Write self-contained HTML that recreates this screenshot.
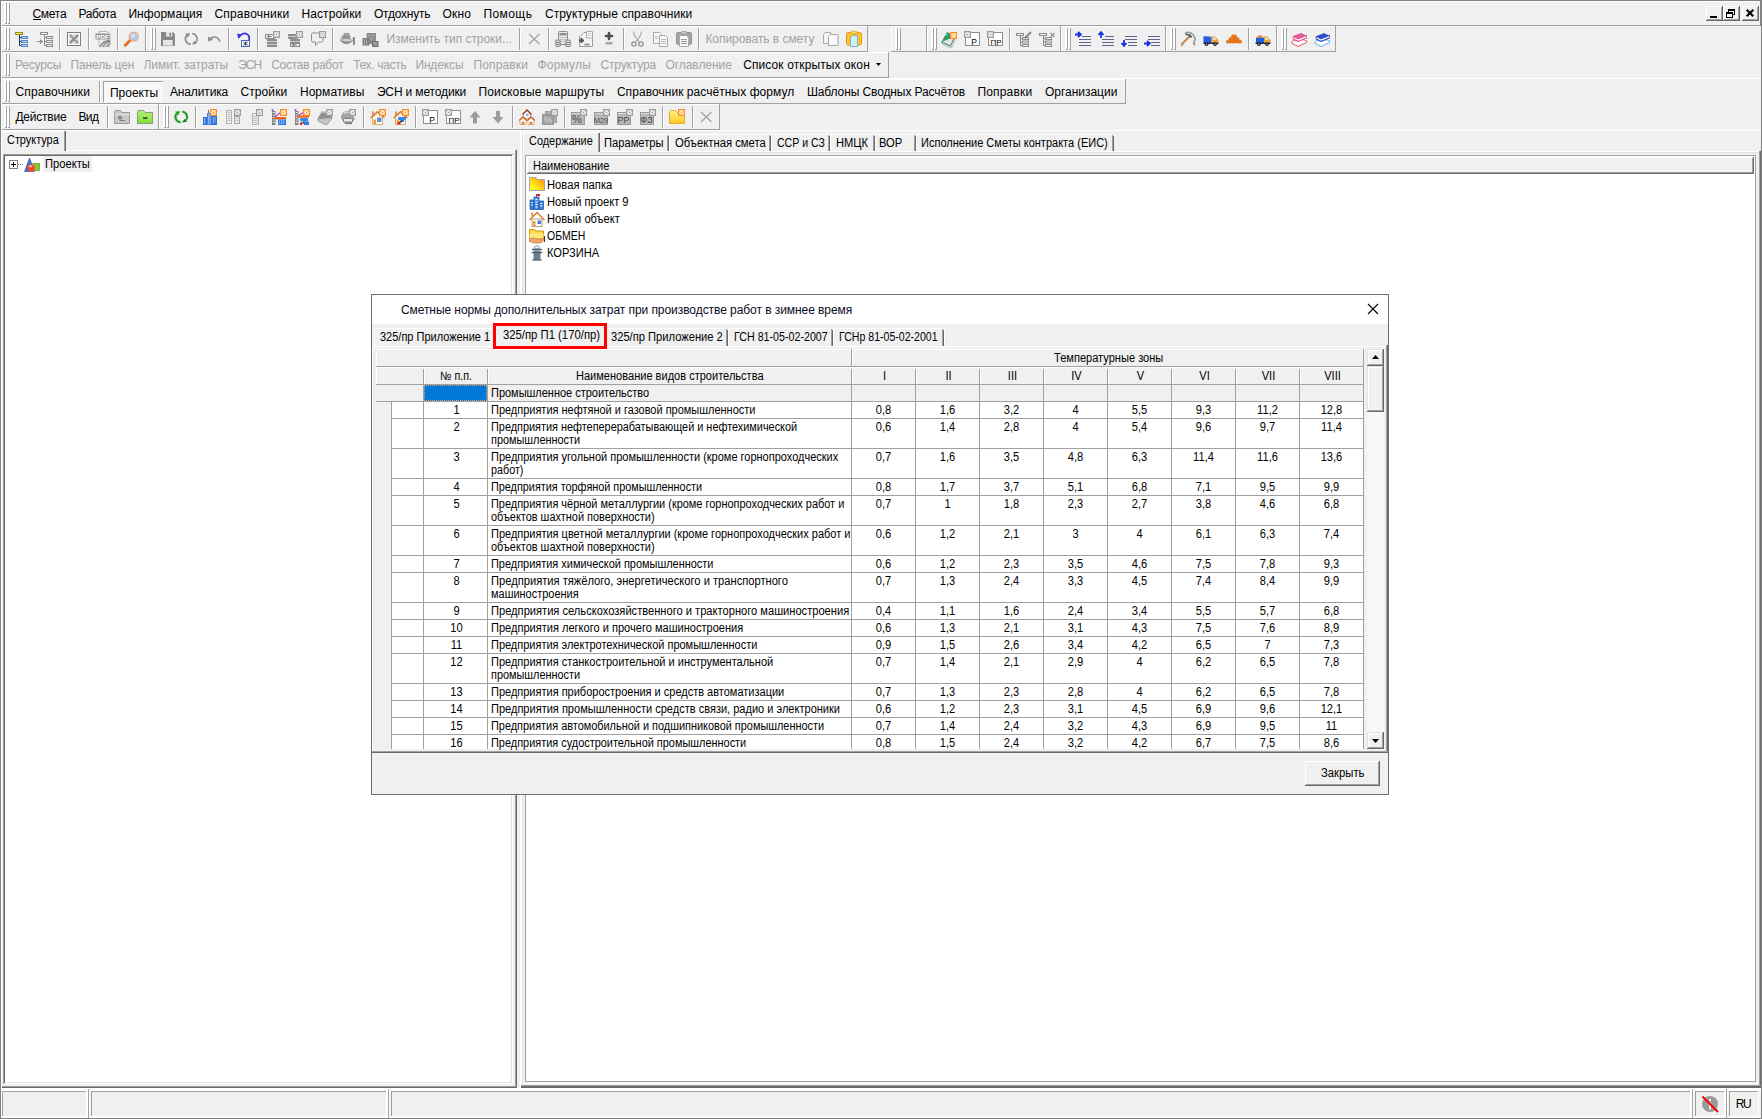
<!DOCTYPE html>
<html lang="ru"><head><meta charset="utf-8"><title>Смета</title>
<style>
html,body{margin:0;padding:0;}
body{width:1762px;height:1119px;overflow:hidden;background:#f0f0f0;position:relative;
 font-family:"Liberation Sans",sans-serif;}
body>div,body>span,body>svg{position:absolute;box-sizing:border-box;}
body>span{white-space:pre;}
svg{overflow:visible;display:block}
</style></head>
<body>
<div style="left:4px;top:3px;width:2px;height:21px;background:#fff"></div>
<div style="left:6px;top:3px;width:1px;height:21px;background:#a0a0a0"></div>
<div style="left:5px;top:23px;width:2px;height:1px;background:#a0a0a0"></div>
<div style="left:7px;top:3px;width:2px;height:21px;background:#fff"></div>
<div style="left:9px;top:3px;width:1px;height:21px;background:#a0a0a0"></div>
<div style="left:8px;top:23px;width:2px;height:1px;background:#a0a0a0"></div>
<span style="left:32.40px;top:5.84px;letter-spacing:-0.247px;font-size:12px;line-height:16px;color:#000;">Смета</span>
<span style="left:78.40px;top:5.84px;letter-spacing:-0.318px;font-size:12px;line-height:16px;color:#000;">Работа</span>
<span style="left:128.40px;top:5.84px;letter-spacing:0.052px;font-size:12px;line-height:16px;color:#000;">Информация</span>
<span style="left:214.40px;top:5.84px;letter-spacing:0.209px;font-size:12px;line-height:16px;color:#000;">Справочники</span>
<span style="left:301.40px;top:5.84px;letter-spacing:0.128px;font-size:12px;line-height:16px;color:#000;">Настройки</span>
<span style="left:373.90px;top:5.84px;letter-spacing:-0.207px;font-size:12px;line-height:16px;color:#000;">Отдохнуть</span>
<span style="left:442.40px;top:5.84px;letter-spacing:0.215px;font-size:12px;line-height:16px;color:#000;">Окно</span>
<span style="left:483.40px;top:5.84px;letter-spacing:0.440px;font-size:12px;line-height:16px;color:#000;">Помощь</span>
<span style="left:544.90px;top:5.84px;letter-spacing:0.085px;font-size:12px;line-height:16px;color:#000;">Структурные справочники</span>
<div style="left:33px;top:19px;width:8px;height:1px;background:#000"></div>
<div style="left:1px;top:25px;width:1759px;height:1px;background:#a0a0a0"></div>
<div style="left:1706px;top:6px;width:17px;height:15px;background:#f0f0f0"></div>
<div style="left:1706px;top:6px;width:16px;height:1px;background:#fff"></div>
<div style="left:1706px;top:6px;width:1px;height:14px;background:#fff"></div>
<div style="left:1706px;top:20px;width:17px;height:1px;background:#696969"></div>
<div style="left:1722px;top:6px;width:1px;height:15px;background:#696969"></div>
<div style="left:1707px;top:19px;width:15px;height:1px;background:#a0a0a0"></div>
<div style="left:1721px;top:7px;width:1px;height:13px;background:#a0a0a0"></div>
<div style="left:1723px;top:6px;width:17px;height:15px;background:#f0f0f0"></div>
<div style="left:1723px;top:6px;width:16px;height:1px;background:#fff"></div>
<div style="left:1723px;top:6px;width:1px;height:14px;background:#fff"></div>
<div style="left:1723px;top:20px;width:17px;height:1px;background:#696969"></div>
<div style="left:1739px;top:6px;width:1px;height:15px;background:#696969"></div>
<div style="left:1724px;top:19px;width:15px;height:1px;background:#a0a0a0"></div>
<div style="left:1738px;top:7px;width:1px;height:13px;background:#a0a0a0"></div>
<div style="left:1742px;top:6px;width:17px;height:15px;background:#f0f0f0"></div>
<div style="left:1742px;top:6px;width:16px;height:1px;background:#fff"></div>
<div style="left:1742px;top:6px;width:1px;height:14px;background:#fff"></div>
<div style="left:1742px;top:20px;width:17px;height:1px;background:#696969"></div>
<div style="left:1758px;top:6px;width:1px;height:15px;background:#696969"></div>
<div style="left:1743px;top:19px;width:15px;height:1px;background:#a0a0a0"></div>
<div style="left:1757px;top:7px;width:1px;height:13px;background:#a0a0a0"></div>
<div style="left:1710px;top:16px;width:7px;height:2px;background:#000"></div>
<div style="left:1728px;top:9px;width:7px;height:6px;border:1px solid #000;border-top-width:2px"></div>
<div style="left:1726px;top:12px;width:7px;height:6px;border:1px solid #000;border-top-width:2px;background:#f0f0f0"></div>
<svg style="left:1742px;top:6px" width="17" height="15" viewBox="0 0 17 15"><path d="M4.7 3.7l6.6 6.600 M11.300 3.700l-6.600 6.600" stroke="#000" stroke-width="2.1" stroke-linecap="butt" fill="none"/></svg>
<div style="left:0px;top:26px;width:146px;height:1px;background:#fff"></div>
<div style="left:0px;top:26px;width:1px;height:26px;background:#fff"></div>
<div style="left:0px;top:51px;width:146px;height:1px;background:#a0a0a0"></div>
<div style="left:145px;top:26px;width:1px;height:26px;background:#a0a0a0"></div>
<div style="left:4px;top:28px;width:2px;height:22px;background:#fff"></div>
<div style="left:6px;top:28px;width:1px;height:22px;background:#a0a0a0"></div>
<div style="left:5px;top:49px;width:2px;height:1px;background:#a0a0a0"></div>
<div style="left:7px;top:28px;width:2px;height:22px;background:#fff"></div>
<div style="left:9px;top:28px;width:1px;height:22px;background:#a0a0a0"></div>
<div style="left:8px;top:49px;width:2px;height:1px;background:#a0a0a0"></div>
<div style="left:146px;top:26px;width:722px;height:1px;background:#fff"></div>
<div style="left:146px;top:26px;width:1px;height:26px;background:#fff"></div>
<div style="left:146px;top:51px;width:722px;height:1px;background:#a0a0a0"></div>
<div style="left:867px;top:26px;width:1px;height:26px;background:#a0a0a0"></div>
<div style="left:150px;top:28px;width:2px;height:22px;background:#fff"></div>
<div style="left:152px;top:28px;width:1px;height:22px;background:#a0a0a0"></div>
<div style="left:151px;top:49px;width:2px;height:1px;background:#a0a0a0"></div>
<div style="left:153px;top:28px;width:2px;height:22px;background:#fff"></div>
<div style="left:155px;top:28px;width:1px;height:22px;background:#a0a0a0"></div>
<div style="left:154px;top:49px;width:2px;height:1px;background:#a0a0a0"></div>
<div style="left:891px;top:26px;width:36px;height:1px;background:#fff"></div>
<div style="left:891px;top:26px;width:1px;height:26px;background:#fff"></div>
<div style="left:891px;top:51px;width:36px;height:1px;background:#a0a0a0"></div>
<div style="left:926px;top:26px;width:1px;height:26px;background:#a0a0a0"></div>
<div style="left:895px;top:28px;width:2px;height:22px;background:#fff"></div>
<div style="left:897px;top:28px;width:1px;height:22px;background:#a0a0a0"></div>
<div style="left:896px;top:49px;width:2px;height:1px;background:#a0a0a0"></div>
<div style="left:898px;top:28px;width:2px;height:22px;background:#fff"></div>
<div style="left:900px;top:28px;width:1px;height:22px;background:#a0a0a0"></div>
<div style="left:899px;top:49px;width:2px;height:1px;background:#a0a0a0"></div>
<div style="left:927px;top:26px;width:134px;height:1px;background:#fff"></div>
<div style="left:927px;top:26px;width:1px;height:26px;background:#fff"></div>
<div style="left:927px;top:51px;width:134px;height:1px;background:#a0a0a0"></div>
<div style="left:1060px;top:26px;width:1px;height:26px;background:#a0a0a0"></div>
<div style="left:931px;top:28px;width:2px;height:22px;background:#fff"></div>
<div style="left:933px;top:28px;width:1px;height:22px;background:#a0a0a0"></div>
<div style="left:932px;top:49px;width:2px;height:1px;background:#a0a0a0"></div>
<div style="left:934px;top:28px;width:2px;height:22px;background:#fff"></div>
<div style="left:936px;top:28px;width:1px;height:22px;background:#a0a0a0"></div>
<div style="left:935px;top:49px;width:2px;height:1px;background:#a0a0a0"></div>
<div style="left:1061px;top:26px;width:105px;height:1px;background:#fff"></div>
<div style="left:1061px;top:26px;width:1px;height:26px;background:#fff"></div>
<div style="left:1061px;top:51px;width:105px;height:1px;background:#a0a0a0"></div>
<div style="left:1165px;top:26px;width:1px;height:26px;background:#a0a0a0"></div>
<div style="left:1065px;top:28px;width:2px;height:22px;background:#fff"></div>
<div style="left:1067px;top:28px;width:1px;height:22px;background:#a0a0a0"></div>
<div style="left:1066px;top:49px;width:2px;height:1px;background:#a0a0a0"></div>
<div style="left:1068px;top:28px;width:2px;height:22px;background:#fff"></div>
<div style="left:1070px;top:28px;width:1px;height:22px;background:#a0a0a0"></div>
<div style="left:1069px;top:49px;width:2px;height:1px;background:#a0a0a0"></div>
<div style="left:1166px;top:26px;width:111px;height:1px;background:#fff"></div>
<div style="left:1166px;top:26px;width:1px;height:26px;background:#fff"></div>
<div style="left:1166px;top:51px;width:111px;height:1px;background:#a0a0a0"></div>
<div style="left:1276px;top:26px;width:1px;height:26px;background:#a0a0a0"></div>
<div style="left:1170px;top:28px;width:2px;height:22px;background:#fff"></div>
<div style="left:1172px;top:28px;width:1px;height:22px;background:#a0a0a0"></div>
<div style="left:1171px;top:49px;width:2px;height:1px;background:#a0a0a0"></div>
<div style="left:1173px;top:28px;width:2px;height:22px;background:#fff"></div>
<div style="left:1175px;top:28px;width:1px;height:22px;background:#a0a0a0"></div>
<div style="left:1174px;top:49px;width:2px;height:1px;background:#a0a0a0"></div>
<div style="left:1277px;top:26px;width:59px;height:1px;background:#fff"></div>
<div style="left:1277px;top:26px;width:1px;height:26px;background:#fff"></div>
<div style="left:1277px;top:51px;width:59px;height:1px;background:#a0a0a0"></div>
<div style="left:1335px;top:26px;width:1px;height:26px;background:#a0a0a0"></div>
<div style="left:1281px;top:28px;width:2px;height:22px;background:#fff"></div>
<div style="left:1283px;top:28px;width:1px;height:22px;background:#a0a0a0"></div>
<div style="left:1282px;top:49px;width:2px;height:1px;background:#a0a0a0"></div>
<div style="left:1284px;top:28px;width:2px;height:22px;background:#fff"></div>
<div style="left:1286px;top:28px;width:1px;height:22px;background:#a0a0a0"></div>
<div style="left:1285px;top:49px;width:2px;height:1px;background:#a0a0a0"></div>
<div style="left:59px;top:28px;width:1px;height:22px;background:#a0a0a0"></div>
<div style="left:60px;top:28px;width:1px;height:22px;background:#fff"></div>
<div style="left:88px;top:28px;width:1px;height:22px;background:#a0a0a0"></div>
<div style="left:89px;top:28px;width:1px;height:22px;background:#fff"></div>
<div style="left:117px;top:28px;width:1px;height:22px;background:#a0a0a0"></div>
<div style="left:118px;top:28px;width:1px;height:22px;background:#fff"></div>
<div style="left:228px;top:28px;width:1px;height:22px;background:#a0a0a0"></div>
<div style="left:229px;top:28px;width:1px;height:22px;background:#fff"></div>
<div style="left:257px;top:28px;width:1px;height:22px;background:#a0a0a0"></div>
<div style="left:258px;top:28px;width:1px;height:22px;background:#fff"></div>
<div style="left:332px;top:28px;width:1px;height:22px;background:#a0a0a0"></div>
<div style="left:333px;top:28px;width:1px;height:22px;background:#fff"></div>
<div style="left:519px;top:28px;width:1px;height:22px;background:#a0a0a0"></div>
<div style="left:520px;top:28px;width:1px;height:22px;background:#fff"></div>
<div style="left:548px;top:28px;width:1px;height:22px;background:#a0a0a0"></div>
<div style="left:549px;top:28px;width:1px;height:22px;background:#fff"></div>
<div style="left:623px;top:28px;width:1px;height:22px;background:#a0a0a0"></div>
<div style="left:624px;top:28px;width:1px;height:22px;background:#fff"></div>
<div style="left:698px;top:28px;width:1px;height:22px;background:#a0a0a0"></div>
<div style="left:699px;top:28px;width:1px;height:22px;background:#fff"></div>
<div style="left:1009px;top:28px;width:1px;height:22px;background:#a0a0a0"></div>
<div style="left:1010px;top:28px;width:1px;height:22px;background:#fff"></div>
<div style="left:1248px;top:28px;width:1px;height:22px;background:#a0a0a0"></div>
<div style="left:1249px;top:28px;width:1px;height:22px;background:#fff"></div>
<span style="left:386.40px;top:30.84px;letter-spacing:-0.036px;font-size:12px;line-height:16px;color:#a2a2a2;">Изменить тип строки...</span>
<span style="left:705.40px;top:30.84px;letter-spacing:-0.045px;font-size:12px;line-height:16px;color:#a2a2a2;">Копировать в смету</span>
<div style="left:0px;top:52px;width:889px;height:1px;background:#fff"></div>
<div style="left:0px;top:52px;width:1px;height:26px;background:#fff"></div>
<div style="left:0px;top:77px;width:889px;height:1px;background:#a0a0a0"></div>
<div style="left:888px;top:52px;width:1px;height:26px;background:#a0a0a0"></div>
<div style="left:4px;top:54px;width:2px;height:22px;background:#fff"></div>
<div style="left:6px;top:54px;width:1px;height:22px;background:#a0a0a0"></div>
<div style="left:5px;top:75px;width:2px;height:1px;background:#a0a0a0"></div>
<div style="left:7px;top:54px;width:2px;height:22px;background:#fff"></div>
<div style="left:9px;top:54px;width:1px;height:22px;background:#a0a0a0"></div>
<div style="left:8px;top:75px;width:2px;height:1px;background:#a0a0a0"></div>
<span style="left:14.90px;top:56.84px;letter-spacing:-0.154px;font-size:12px;line-height:16px;color:#a2a2a2;">Ресурсы</span>
<span style="left:70.40px;top:56.84px;letter-spacing:-0.083px;font-size:12px;line-height:16px;color:#a2a2a2;">Панель цен</span>
<span style="left:143.40px;top:56.84px;letter-spacing:-0.017px;font-size:12px;line-height:16px;color:#a2a2a2;">Лимит. затраты</span>
<span style="left:238.15px;top:56.84px;letter-spacing:-0.906px;font-size:12px;line-height:16px;color:#a2a2a2;">ЭСН</span>
<span style="left:271.15px;top:56.84px;letter-spacing:-0.247px;font-size:12px;line-height:16px;color:#a2a2a2;">Состав работ</span>
<span style="left:353.15px;top:56.84px;letter-spacing:-0.317px;font-size:12px;line-height:16px;color:#a2a2a2;">Тех. часть</span>
<span style="left:415.40px;top:56.84px;letter-spacing:-0.134px;font-size:12px;line-height:16px;color:#a2a2a2;">Индексы</span>
<span style="left:473.40px;top:56.84px;letter-spacing:0.158px;font-size:12px;line-height:16px;color:#a2a2a2;">Поправки</span>
<span style="left:537.40px;top:56.84px;letter-spacing:0.219px;font-size:12px;line-height:16px;color:#a2a2a2;">Формулы</span>
<span style="left:600.40px;top:56.84px;letter-spacing:-0.132px;font-size:12px;line-height:16px;color:#a2a2a2;">Структура</span>
<span style="left:665.40px;top:56.84px;letter-spacing:-0.041px;font-size:12px;line-height:16px;color:#a2a2a2;">Оглавление</span>
<span style="left:743.15px;top:56.84px;letter-spacing:0.111px;font-size:12px;line-height:16px;color:#000;">Список открытых окон</span>
<svg style="left:876px;top:63px" width="5" height="3" viewBox="0 0 5 3"><path d="M0 0h5l-2.500 3z" fill="#000"/></svg>
<div style="left:1px;top:78px;width:1760px;height:1px;background:#fff"></div>
<div style="left:0px;top:79px;width:1126px;height:1px;background:#fff"></div>
<div style="left:0px;top:79px;width:1px;height:25px;background:#fff"></div>
<div style="left:0px;top:103px;width:1126px;height:1px;background:#a0a0a0"></div>
<div style="left:1125px;top:79px;width:1px;height:25px;background:#a0a0a0"></div>
<div style="left:4px;top:81px;width:2px;height:21px;background:#fff"></div>
<div style="left:6px;top:81px;width:1px;height:21px;background:#a0a0a0"></div>
<div style="left:5px;top:101px;width:2px;height:1px;background:#a0a0a0"></div>
<div style="left:7px;top:81px;width:2px;height:21px;background:#fff"></div>
<div style="left:9px;top:81px;width:1px;height:21px;background:#a0a0a0"></div>
<div style="left:8px;top:101px;width:2px;height:1px;background:#a0a0a0"></div>
<span style="left:15.40px;top:83.84px;letter-spacing:0.186px;font-size:12px;line-height:16px;color:#000;">Справочники</span>
<span style="left:169.90px;top:83.84px;letter-spacing:-0.128px;font-size:12px;line-height:16px;color:#000;">Аналитика</span>
<span style="left:240.40px;top:83.84px;letter-spacing:0.118px;font-size:12px;line-height:16px;color:#000;">Стройки</span>
<span style="left:299.90px;top:83.84px;letter-spacing:0.069px;font-size:12px;line-height:16px;color:#000;">Нормативы</span>
<span style="left:376.90px;top:83.84px;letter-spacing:-0.146px;font-size:12px;line-height:16px;color:#000;">ЭСН и методики</span>
<span style="left:478.40px;top:83.84px;letter-spacing:0.169px;font-size:12px;line-height:16px;color:#000;">Поисковые маршруты</span>
<span style="left:616.90px;top:83.84px;letter-spacing:0.059px;font-size:12px;line-height:16px;color:#000;">Справочник расчётных формул</span>
<span style="left:806.90px;top:83.84px;letter-spacing:-0.106px;font-size:12px;line-height:16px;color:#000;">Шаблоны Сводных Расчётов</span>
<span style="left:977.40px;top:83.84px;letter-spacing:0.189px;font-size:12px;line-height:16px;color:#000;">Поправки</span>
<span style="left:1044.90px;top:83.84px;letter-spacing:-0.009px;font-size:12px;line-height:16px;color:#000;">Организации</span>
<div style="left:99px;top:81px;width:1px;height:21px;background:#a0a0a0"></div>
<div style="left:100px;top:81px;width:1px;height:21px;background:#fff"></div>
<div style="left:103px;top:81px;width:60px;height:21px;background:repeating-conic-gradient(#fff 0 25%,#f0f0f0 0 50%) 0 0/2px 2px"></div>
<div style="left:103px;top:81px;width:60px;height:1px;background:#a0a0a0"></div>
<div style="left:103px;top:81px;width:1px;height:21px;background:#a0a0a0"></div>
<span style="left:109.90px;top:84.84px;letter-spacing:0.013px;font-size:12px;line-height:16px;color:#000;">Проекты</span>
<div style="left:0px;top:104px;width:159px;height:1px;background:#fff"></div>
<div style="left:0px;top:104px;width:1px;height:26px;background:#fff"></div>
<div style="left:0px;top:129px;width:159px;height:1px;background:#a0a0a0"></div>
<div style="left:158px;top:104px;width:1px;height:26px;background:#a0a0a0"></div>
<div style="left:4px;top:106px;width:2px;height:22px;background:#fff"></div>
<div style="left:6px;top:106px;width:1px;height:22px;background:#a0a0a0"></div>
<div style="left:5px;top:127px;width:2px;height:1px;background:#a0a0a0"></div>
<div style="left:7px;top:106px;width:2px;height:22px;background:#fff"></div>
<div style="left:9px;top:106px;width:1px;height:22px;background:#a0a0a0"></div>
<div style="left:8px;top:127px;width:2px;height:1px;background:#a0a0a0"></div>
<div style="left:159px;top:104px;width:561px;height:1px;background:#fff"></div>
<div style="left:159px;top:104px;width:1px;height:26px;background:#fff"></div>
<div style="left:159px;top:129px;width:561px;height:1px;background:#a0a0a0"></div>
<div style="left:719px;top:104px;width:1px;height:26px;background:#a0a0a0"></div>
<div style="left:163px;top:106px;width:2px;height:22px;background:#fff"></div>
<div style="left:165px;top:106px;width:1px;height:22px;background:#a0a0a0"></div>
<div style="left:164px;top:127px;width:2px;height:1px;background:#a0a0a0"></div>
<div style="left:166px;top:106px;width:2px;height:22px;background:#fff"></div>
<div style="left:168px;top:106px;width:1px;height:22px;background:#a0a0a0"></div>
<div style="left:167px;top:127px;width:2px;height:1px;background:#a0a0a0"></div>
<span style="left:15.40px;top:108.84px;letter-spacing:-0.221px;font-size:12px;line-height:16px;color:#000;">Действие</span>
<span style="left:78.40px;top:108.84px;letter-spacing:-0.573px;font-size:12px;line-height:16px;color:#000;">Вид</span>
<div style="left:107px;top:106px;width:1px;height:22px;background:#a0a0a0"></div>
<div style="left:108px;top:106px;width:1px;height:22px;background:#fff"></div>
<div style="left:195px;top:106px;width:1px;height:22px;background:#a0a0a0"></div>
<div style="left:196px;top:106px;width:1px;height:22px;background:#fff"></div>
<div style="left:363px;top:106px;width:1px;height:22px;background:#a0a0a0"></div>
<div style="left:364px;top:106px;width:1px;height:22px;background:#fff"></div>
<div style="left:415px;top:106px;width:1px;height:22px;background:#a0a0a0"></div>
<div style="left:416px;top:106px;width:1px;height:22px;background:#fff"></div>
<div style="left:512px;top:106px;width:1px;height:22px;background:#a0a0a0"></div>
<div style="left:513px;top:106px;width:1px;height:22px;background:#fff"></div>
<div style="left:564px;top:106px;width:1px;height:22px;background:#a0a0a0"></div>
<div style="left:565px;top:106px;width:1px;height:22px;background:#fff"></div>
<div style="left:662px;top:106px;width:1px;height:22px;background:#a0a0a0"></div>
<div style="left:663px;top:106px;width:1px;height:22px;background:#fff"></div>
<div style="left:692px;top:106px;width:1px;height:22px;background:#a0a0a0"></div>
<div style="left:693px;top:106px;width:1px;height:22px;background:#fff"></div>
<div style="left:1px;top:130px;width:1760px;height:1px;background:#fff"></div>
<div style="left:1px;top:1088px;width:1760px;height:3px;background:#fff"></div>
<div style="left:2px;top:1091px;width:84px;height:1px;background:#a0a0a0"></div>
<div style="left:2px;top:1091px;width:1px;height:25px;background:#a0a0a0"></div>
<div style="left:2px;top:1116px;width:85px;height:1px;background:#fff"></div>
<div style="left:86px;top:1091px;width:1px;height:26px;background:#fff"></div>
<div style="left:87px;top:1089px;width:1px;height:28px;background:#fff"></div>
<div style="left:88px;top:1089px;width:1px;height:30px;background:#a0a0a0"></div>
<div style="left:89px;top:1089px;width:1px;height:28px;background:#fff"></div>
<div style="left:91px;top:1091px;width:295px;height:1px;background:#a0a0a0"></div>
<div style="left:91px;top:1091px;width:1px;height:25px;background:#a0a0a0"></div>
<div style="left:91px;top:1116px;width:296px;height:1px;background:#fff"></div>
<div style="left:386px;top:1091px;width:1px;height:26px;background:#fff"></div>
<div style="left:387px;top:1089px;width:1px;height:28px;background:#fff"></div>
<div style="left:388px;top:1089px;width:1px;height:30px;background:#a0a0a0"></div>
<div style="left:389px;top:1089px;width:1px;height:28px;background:#fff"></div>
<div style="left:391px;top:1091px;width:1299px;height:1px;background:#a0a0a0"></div>
<div style="left:391px;top:1091px;width:1px;height:25px;background:#a0a0a0"></div>
<div style="left:391px;top:1116px;width:1300px;height:1px;background:#fff"></div>
<div style="left:1690px;top:1091px;width:1px;height:26px;background:#fff"></div>
<div style="left:1691px;top:1089px;width:1px;height:28px;background:#fff"></div>
<div style="left:1692px;top:1089px;width:1px;height:30px;background:#a0a0a0"></div>
<div style="left:1693px;top:1089px;width:1px;height:28px;background:#fff"></div>
<div style="left:1695px;top:1091px;width:29px;height:1px;background:#a0a0a0"></div>
<div style="left:1695px;top:1091px;width:1px;height:25px;background:#a0a0a0"></div>
<div style="left:1695px;top:1116px;width:30px;height:1px;background:#fff"></div>
<div style="left:1724px;top:1091px;width:1px;height:26px;background:#fff"></div>
<div style="left:1725px;top:1089px;width:1px;height:28px;background:#fff"></div>
<div style="left:1726px;top:1089px;width:1px;height:30px;background:#a0a0a0"></div>
<div style="left:1727px;top:1089px;width:1px;height:28px;background:#fff"></div>
<div style="left:1729px;top:1091px;width:29px;height:1px;background:#a0a0a0"></div>
<div style="left:1729px;top:1091px;width:1px;height:25px;background:#a0a0a0"></div>
<div style="left:1729px;top:1116px;width:30px;height:1px;background:#fff"></div>
<div style="left:1758px;top:1091px;width:1px;height:26px;background:#fff"></div>
<span style="left:1735.70px;top:1095.84px;letter-spacing:-1.472px;font-size:12px;line-height:16px;color:#000;">RU</span>
<svg style="left:1702px;top:1096px" width="16" height="16" viewBox="0 0 16 16"><circle cx="8" cy="8" r="8" fill="#9a9a9a"/><rect x="7" y="6" width="2" height="7.500" fill="#f0f0f0"/><rect x="7" y="3" width="2" height="2" fill="#f0f0f0"/><path d="M0.500 0.500l15.500 15.500" stroke="#ff0000" stroke-width="2"/></svg>
<div style="left:0px;top:0px;width:1762px;height:1px;background:#828282"></div>
<div style="left:0px;top:0px;width:1px;height:1119px;background:#828282"></div>
<div style="left:1px;top:1px;width:1759px;height:1px;background:#fff"></div>
<div style="left:1px;top:1px;width:1px;height:1117px;background:#fff"></div>
<div style="left:1761px;top:0px;width:1px;height:1119px;background:#828282"></div>
<div style="left:1760px;top:0px;width:1px;height:26px;background:#828282"></div>
<div style="left:0px;top:1118px;width:1762px;height:1px;background:#828282"></div>
<div style="left:1px;top:1117px;width:1760px;height:1px;background:#fff"></div>
<div style="left:88px;top:1117px;width:1px;height:1px;background:#a0a0a0"></div>
<div style="left:388px;top:1117px;width:1px;height:1px;background:#a0a0a0"></div>
<div style="left:1692px;top:1117px;width:1px;height:1px;background:#a0a0a0"></div>
<div style="left:1726px;top:1117px;width:1px;height:1px;background:#a0a0a0"></div>
<svg style="left:14px;top:31px" width="16" height="16" viewBox="0 0 16 16"><rect x="1.5" y="1.5" width="7" height="2" fill="#ffff00" stroke="#8a8a3a"/><path d="M5.500 4v10.500h2 M5.500 6.500h2 M5.500 10.500h2" fill="none" stroke="#1f2f5a"/><rect x="7.500" y="5.5" width="6" height="2" fill="#a8d0f8" stroke="#5a86c8"/><rect x="7.500" y="9.5" width="6" height="2" fill="#a8d0f8" stroke="#5a86c8"/><rect x="7.500" y="13.5" width="6" height="2" fill="#a8d0f8" stroke="#5a86c8"/></svg>
<svg style="left:37px;top:31px" width="16" height="16" viewBox="0 0 16 16"><path d="M0 10h3v-2l3 2.500-3 2.500v-2h-3z" fill="#8c8c8c"/><rect x="3.500" y="1.500" width="7" height="2" fill="#f4f4f4" stroke="#8c8c8c"/><path d="M7.500 4v10.500h2 M7.500 6.500h2 M7.500 10.500h2" fill="none" stroke="#8c8c8c"/><rect x="9.500" y="5.5" width="6" height="2" fill="#f4f4f4" stroke="#8c8c8c"/><rect x="9.500" y="9.5" width="6" height="2" fill="#f4f4f4" stroke="#8c8c8c"/><rect x="9.500" y="13.5" width="6" height="2" fill="#f4f4f4" stroke="#8c8c8c"/></svg>
<svg style="left:66px;top:31px" width="16" height="16" viewBox="0 0 16 16"><rect x="1.500" y="1.500" width="13" height="13" fill="#fbfbfb" stroke="#7e7e7e"/><rect x="3" y="3" width="10" height="10" fill="#e2e2e2"/><path d="M4 4l8 8 M12 4l-8 8" stroke="#8a8a8a" stroke-width="2.4"/><path d="M4.500 4l8 8" stroke="#bdbdbd" stroke-width="0.8"/></svg>
<svg style="left:95px;top:31px" width="16" height="16" viewBox="0 0 16 16"><path d="M4 0.500h8l3 3v12h-11z" fill="#f2f2f2" stroke="#b8b8b8"/><rect x="0.500" y="2.500" width="14" height="6" rx="0.800" fill="#949494"/><text x="7.500" y="7.800" font-size="6.2" font-weight="bold" text-anchor="middle" fill="#fff" font-family="Liberation Sans">PDF</text><path d="M5 15.500c2-4 5-6 10-6 M8 15.500c1.500-3 4-4.500 7-4.500 M11.500 15.500c1-1.500 2-2.500 3.500-2.500" fill="none" stroke="#8a8a8a" stroke-width="1.500"/></svg>
<svg style="left:124px;top:31px" width="16" height="16" viewBox="0 0 16 16"><path d="M1.200 14.200l5.200-5.200" stroke="#d9600f" stroke-width="2.800" stroke-linecap="round"/><path d="M1.200 13.600l5-5" stroke="#f59a4a" stroke-width="1" stroke-linecap="round"/><circle cx="9.700" cy="5.700" r="4.500" fill="#b4c8f2" stroke="#f0a878" stroke-width="1.300"/><circle cx="9" cy="4.800" r="2" fill="#d6e2fa"/></svg>
<svg style="left:160px;top:31px" width="16" height="16" viewBox="0 0 16 16"><path d="M1 1h12l1.900 1.900v12.100h-13.900z" fill="#868686"/><rect x="3" y="9" width="9.600" height="5.600" fill="#e6e6e6"/><rect x="6" y="1" width="6.300" height="4.600" fill="#e0e0e0"/><rect x="9.500" y="2" width="1.300" height="2.800" fill="#6a6a6a"/><path d="M3 14.800h9.600" stroke="#c4c4c4"/></svg>
<svg style="left:183px;top:31px" width="16" height="16" viewBox="0 0 16 16"><g transform="translate(0.900,0.700) scale(0.900)"><path d="M2.900 4.300A6.600 6.100 0 0 0 7.600 14" fill="none" stroke="#8a8a8a" stroke-width="1.7"/><path d="M7.100 1.800l-5.600 0.300 2.700 4.600z" fill="#8a8a8a"/><path d="M9.300 2A6.600 6.100 0 0 1 13.200 11.800" fill="none" stroke="#8a8a8a" stroke-width="1.7"/><path d="M9 14.200l5.400-0.900-2.600-3.100z" fill="#7c7c7c"/></g></svg>
<svg style="left:206px;top:31px" width="16" height="16" viewBox="0 0 16 16"><path d="M3.500 9c2.500-4.500 8.500-4 10.500 1.500" fill="none" stroke="#8c8c8c" stroke-width="1.500"/><path d="M1.700 5.200l0.600 5.300 4.700-1.700z" fill="#8c8c8c"/></svg>
<svg style="left:235px;top:31px" width="16" height="16" viewBox="0 0 16 16"><path d="M5 4.800c4.500-5 10.500-1.500 9 4.200" fill="none" stroke="#2c2ce6" stroke-width="1.700"/><path d="M2 2.500l5 1.300-3.500 4.200z" fill="#2c2ce6"/><rect x="6.500" y="9.500" width="8" height="6" fill="#fff" stroke="#4a62c0"/><path d="M8.300 11l4.400 3.200 M12.700 11l-4.400 3.200 M10.500 10.700v3.800" stroke="#1a1a1a" stroke-width="0.800"/></svg>
<svg style="left:264px;top:31px" width="16" height="16" viewBox="0 0 16 16"><rect x="3" y="8" width="10" height="8" fill="#8e8e8e"/><path d="M3 10.500h10 M3 13.500h10" stroke="#c8c8c8"/><rect x="1.500" y="3.500" width="9" height="4" fill="#ececec" stroke="#8c8c8c"/><path d="M3.500 5.500h4 M3.500 5.500l1.500-1.200 M3.500 5.500l1.500 1.200" stroke="#6a6a6a" stroke-width="0.9" fill="none"/><path d="M9 0h7v7h-7z" fill="#9c9c9c"/><path d="M13.8 4.8l0.8 0.8 M13.8 2.2l0.8 -0.8 M11.2 4.8l-0.8 0.8 M11.2 2.2l-0.8 -0.8 M14.3 3.5l0.8 0.0 M10.7 3.5l-0.8 0.0 M12.5 5.3l0.0 0.8 M12.5 1.7l0.0 -0.8 " stroke="#fff" stroke-width="1.100"/><circle cx="12.5" cy="3.5" r="1.900" fill="#fff"/><circle cx="12.5" cy="3.5" r="0.900" fill="#9c9c9c"/></svg>
<svg style="left:287px;top:31px" width="16" height="16" viewBox="0 0 16 16"><rect x="3" y="8" width="10" height="4" fill="#8e8e8e"/><path d="M3 10.500h10" stroke="#c8c8c8"/><rect x="3.500" y="12.500" width="9" height="3" fill="#ececec" stroke="#8c8c8c"/><path d="M5.500 14h4 M5.500 14l1.500-1 M5.500 14l1.500 1" stroke="#6a6a6a" stroke-width="0.9" fill="none"/><rect x="1" y="3" width="9.500" height="5" fill="#8e8e8e"/><path d="M1 5.500h9.500" stroke="#c8c8c8"/><path d="M9 0h7v7h-7z" fill="#9c9c9c"/><path d="M13.8 4.8l0.8 0.8 M13.8 2.2l0.8 -0.8 M11.2 4.8l-0.8 0.8 M11.2 2.2l-0.8 -0.8 M14.3 3.5l0.8 0.0 M10.7 3.5l-0.8 0.0 M12.5 5.3l0.0 0.8 M12.5 1.7l0.0 -0.8 " stroke="#fff" stroke-width="1.100"/><circle cx="12.5" cy="3.5" r="1.900" fill="#fff"/><circle cx="12.5" cy="3.5" r="0.900" fill="#9c9c9c"/></svg>
<svg style="left:310px;top:31px" width="16" height="16" viewBox="0 0 16 16"><path d="M1.500 3.500c0-1 0.500-1.500 1.500-1.500h8.500c1 0 1.500 0.500 1.500 1.500v6c0 1-0.500 1.500-1.500 1.500h-3l-3 3.500v-3.500h-2.500c-1 0-1.500-0.500-1.500-1.500z" fill="#f0f0f0" stroke="#8e8e8e"/><path d="M9 0h7v7h-7z" fill="#9c9c9c"/><path d="M13.8 4.8l0.8 0.8 M13.8 2.2l0.8 -0.8 M11.2 4.8l-0.8 0.8 M11.2 2.2l-0.8 -0.8 M14.3 3.5l0.8 0.0 M10.7 3.5l-0.8 0.0 M12.5 5.3l0.0 0.8 M12.5 1.7l0.0 -0.8 " stroke="#fff" stroke-width="1.100"/><circle cx="12.5" cy="3.5" r="1.900" fill="#fff"/><circle cx="12.5" cy="3.5" r="0.900" fill="#9c9c9c"/></svg>
<svg style="left:339px;top:31px" width="16" height="16" viewBox="0 0 16 16"><path d="M0.500 8c2 6 11 7 14 0.500c-4 2.500-10 2.500-14-0.500z" fill="#8e8e8e"/><path d="M1 7.500c3 2 9 2 13 0" fill="none" stroke="#a8a8a8"/><rect x="3" y="5" width="8" height="2.500" fill="#9a9a9a" stroke="#7c7c7c" stroke-width="0.600"/><rect x="5" y="2.500" width="5" height="2.500" fill="#ababab" stroke="#7c7c7c" stroke-width="0.600"/><path d="M15 6v8" stroke="#4a4a4a" stroke-width="1.200"/><path d="M5 9.500h5" stroke="#d0d0d0" stroke-width="1.200"/></svg>
<svg style="left:362px;top:31px" width="16" height="16" viewBox="0 0 16 16"><rect x="4.500" y="2" width="9.500" height="11" fill="#8e8e8e"/><path d="M6.500 4.500h2 M10.500 4.500h2 M8 6.500l2 2 M10 6.500l-2 2" stroke="#bcbcbc"/><rect x="0.500" y="7" width="7" height="7.500" fill="#7e7e7e"/><path d="M2.500 8.500v5 M4.500 8.500v5" stroke="#b0b0b0"/><rect x="10.500" y="10.500" width="5.500" height="5" fill="#8a8a8a" stroke="#6e6e6e"/><path d="M11.500 12h3.500" stroke="#c0c0c0"/></svg>
<svg style="left:526px;top:31px" width="16" height="16" viewBox="0 0 16 16"><path d="M3 3l10.500 10 M13.500 3l-10.500 10" stroke="#a4a4a4" stroke-width="1.400"/></svg>
<svg style="left:555px;top:31px" width="16" height="16" viewBox="0 0 16 16"><rect x="3.500" y="0.500" width="9" height="13" rx="0.800" fill="#e8e8e8" stroke="#8e8e8e"/><rect x="4.500" y="2" width="7" height="2.400" fill="#8e8e8e"/><path d="M5 6.500h6 M5 8.500h6 M5 10.500h6" stroke="#b0b0b0" stroke-dasharray="1.400 0.900"/><ellipse cx="3" cy="14.3" rx="2.800" ry="1.300" fill="#d8d8d8" stroke="#7e7e7e" stroke-width="0.900"/><ellipse cx="3" cy="12.3" rx="2.800" ry="1.300" fill="#d8d8d8" stroke="#7e7e7e" stroke-width="0.900"/><ellipse cx="3" cy="10.3" rx="2.800" ry="1.300" fill="#d8d8d8" stroke="#7e7e7e" stroke-width="0.900"/><ellipse cx="13" cy="14.3" rx="2.800" ry="1.300" fill="#d8d8d8" stroke="#7e7e7e" stroke-width="0.900"/><ellipse cx="13" cy="12.3" rx="2.800" ry="1.300" fill="#d8d8d8" stroke="#7e7e7e" stroke-width="0.900"/><ellipse cx="13" cy="10.3" rx="2.800" ry="1.300" fill="#d8d8d8" stroke="#7e7e7e" stroke-width="0.900"/></svg>
<svg style="left:578px;top:31px" width="16" height="16" viewBox="0 0 16 16"><path d="M1.500 6l4.500-4.500h8.500v14h-13z" fill="#f4f4f4" stroke="#9a9a9a"/><path d="M8.500 0.500h6v6.500h-6z" fill="#fbfbfb" stroke="#a8a8a8"/><path d="M10 2.500h3 M10 4.500h3" stroke="#c4c4c4"/><path d="M1 9.500h5 M3.500 7v5" stroke="#4e4e4e" stroke-width="1.900"/><path d="M6.500 13.500h5" stroke="#8e8e8e" stroke-width="1.800"/></svg>
<svg style="left:601px;top:31px" width="16" height="16" viewBox="0 0 16 16"><path d="M5 5h6 M8 2v6" stroke="#4e4e4e" stroke-width="2.600" stroke-linecap="round"/><rect x="4.500" y="11" width="7" height="2.500" rx="0.800" fill="#a4a4a4"/></svg>
<svg style="left:630px;top:31px" width="16" height="16" viewBox="0 0 16 16"><path d="M3.500 0.500c0.500 4 2.500 7 5.500 10 M11.500 0.500c-0.500 4-2.500 7-5.500 10" stroke="#a8a8a8" stroke-width="1.200" fill="none"/><circle cx="4" cy="13" r="2.200" fill="none" stroke="#8a8a8a" stroke-width="1.200"/><circle cx="11" cy="13" r="2.200" fill="none" stroke="#8a8a8a" stroke-width="1.200"/></svg>
<svg style="left:653px;top:31px" width="16" height="16" viewBox="0 0 16 16"><path d="M0.5 1.5h6l2 2v9h-8z" fill="#f8f8f8" stroke="#a8a8a8"/><path d="M6.5 4.5h6l2 2v9h-8z" fill="#f8f8f8" stroke="#a8a8a8"/><path d="M2 5.500h3 M2 7.500h3 M8 8.500h5 M8 10.500h5 M8 12.500h5" stroke="#b8b8b8"/></svg>
<svg style="left:676px;top:31px" width="16" height="16" viewBox="0 0 16 16"><rect x="0.500" y="1.500" width="15" height="12" rx="1.500" fill="#a6a6a6" stroke="#949494"/><rect x="5" y="0.500" width="6" height="2.500" rx="1" fill="#c6c6c6" stroke="#949494" stroke-width="0.700"/><path d="M3.5 4.5h7l2 2v9h-9z" fill="#f8f8f8" stroke="#a8a8a8"/><path d="M5 8.500h6 M5 10.500h6 M5 12.500h6" stroke="#9a9a9a"/></svg>
<svg style="left:823px;top:31px" width="16" height="16" viewBox="0 0 16 16"><path d="M0.500 3.500l2-2h5v11h-7z" fill="#f6f6f6" stroke="#a8a8a8"/><path d="M5.500 5.500l2-2h7.500v11h-9.500z" fill="#f9f9f9" stroke="#a8a8a8"/></svg>
<svg style="left:846px;top:31px" width="16" height="16" viewBox="0 0 16 16"><rect x="0.500" y="1.500" width="15" height="12.500" rx="1.800" fill="#ffc428" stroke="#d99a1e"/><rect x="5" y="0.300" width="6" height="2.400" rx="1" fill="#ffd86a" stroke="#d99a1e" stroke-width="0.700"/><path d="M4.500 6.500l2-2h5v11h-7z" fill="#cdeef4" stroke="#8ab0c0"/></svg>
<svg style="left:941px;top:31px" width="16" height="16" viewBox="0 0 16 16"><path d="M0.500 11l5.500-10 8 4.500-4.500 9.500z" fill="#2e9a5e"/><path d="M0.500 11l1.500 2.500 8.500 3.500 4-9.500-0.500-2" fill="#dfe6ea" stroke="#9aa8b0" stroke-width="0.700"/><path d="M0.500 11l9 4 4.500-9.500" fill="none" stroke="#1f7a45" stroke-width="0.900"/><path d="M5 3.500l1.500 0.800" stroke="#d8f0e0"/><path d="M9 1h7v7h-7z" fill="#ff8c1a"/><path d="M13.8 5.8l0.8 0.8 M13.8 3.2l0.8 -0.8 M11.2 5.8l-0.8 0.8 M11.2 3.2l-0.8 -0.8 M14.3 4.5l0.8 0.0 M10.7 4.5l-0.8 0.0 M12.5 6.3l0.0 0.8 M12.5 2.7l0.0 -0.8 " stroke="#fff" stroke-width="1.100"/><circle cx="12.5" cy="4.5" r="1.900" fill="#fff"/><circle cx="12.5" cy="4.5" r="0.900" fill="#ff8c1a"/></svg>
<svg style="left:964px;top:31px" width="16" height="16" viewBox="0 0 16 16"><rect x="1.500" y="1.500" width="14" height="13" fill="#fff" stroke="#8e8e8e"/><text x="10" y="13.600" font-size="8.5" text-anchor="middle" fill="#000" font-family="Liberation Sans">P</text><path d="M0 0h7v7h-7z" fill="#9c9c9c"/><path d="M4.8 4.8l0.8 0.8 M4.8 2.2l0.8 -0.8 M2.2 4.8l-0.8 0.8 M2.2 2.2l-0.8 -0.8 M5.3 3.5l0.8 0.0 M1.7 3.5l-0.8 0.0 M3.5 5.3l0.0 0.8 M3.5 1.7l0.0 -0.8 " stroke="#fff" stroke-width="1.100"/><circle cx="3.5" cy="3.5" r="1.900" fill="#fff"/><circle cx="3.5" cy="3.5" r="0.900" fill="#9c9c9c"/></svg>
<svg style="left:987px;top:31px" width="16" height="16" viewBox="0 0 16 16"><rect x="1.500" y="1.500" width="14" height="13" fill="#fff" stroke="#8e8e8e"/><text x="9" y="13.600" font-size="8" text-anchor="middle" fill="#000" font-family="Liberation Sans">ПР</text><path d="M0 0h7v7h-7z" fill="#9c9c9c"/><path d="M4.8 4.8l0.8 0.8 M4.8 2.2l0.8 -0.8 M2.2 4.8l-0.8 0.8 M2.2 2.2l-0.8 -0.8 M5.3 3.5l0.8 0.0 M1.7 3.5l-0.8 0.0 M3.5 5.3l0.0 0.8 M3.5 1.7l0.0 -0.8 " stroke="#fff" stroke-width="1.100"/><circle cx="3.5" cy="3.5" r="1.900" fill="#fff"/><circle cx="3.5" cy="3.5" r="0.900" fill="#9c9c9c"/></svg>
<svg style="left:1016px;top:31px" width="16" height="16" viewBox="0 0 16 16"><rect x="0.500" y="2.500" width="7" height="2" fill="#f0f0f0" stroke="#8c8c8c"/><path d="M4.500 5v9.500h2 M4.500 7.500h2 M4.500 11h2" fill="none" stroke="#8c8c8c"/><rect x="6.500" y="6.5" width="6" height="2" fill="#f0f0f0" stroke="#8c8c8c"/><rect x="6.500" y="10" width="6" height="2" fill="#f0f0f0" stroke="#8c8c8c"/><rect x="6.500" y="13.5" width="6" height="2" fill="#f0f0f0" stroke="#8c8c8c"/><path d="M15 1l-5.500 5.500" stroke="#8e8e8e" stroke-width="2.200"/><path d="M9.800 5.800l-1.300 2.200 2.200-1.300z" fill="#6e6e6e"/></svg>
<svg style="left:1039px;top:31px" width="16" height="16" viewBox="0 0 16 16"><rect x="0.500" y="2.500" width="7" height="2" fill="#f0f0f0" stroke="#8c8c8c"/><path d="M4.500 5v9.500h2 M4.500 7.500h2 M4.500 11h2" fill="none" stroke="#8c8c8c"/><rect x="6.500" y="6.5" width="6" height="2" fill="#f0f0f0" stroke="#8c8c8c"/><rect x="6.500" y="10" width="6" height="2" fill="#f0f0f0" stroke="#8c8c8c"/><rect x="6.500" y="13.5" width="6" height="2" fill="#f0f0f0" stroke="#8c8c8c"/><path d="M11.500 2l4 4 M15.500 2l-4 4" stroke="#8e8e8e" stroke-width="1.100"/></svg>
<svg style="left:1075px;top:31px" width="16" height="16" viewBox="0 0 16 16"><path d="M0 3.500h5 M3 1l2.800 2.500-2.800 2.500" fill="none" stroke="#1430e6" stroke-width="1.800"/><path d="M7 5.500h9 M4 8.500h12 M4 11.500h12 M4 14.500h12" stroke="#5e6286"/></svg>
<svg style="left:1098px;top:31px" width="16" height="16" viewBox="0 0 16 16"><path d="M3 7v-5 M0.500 4l2.500-2.800 2.500 2.800" fill="none" stroke="#1430e6" stroke-width="1.800"/><path d="M7 5.500h9 M4 8.500h12 M4 11.500h12 M4 14.500h12" stroke="#5e6286"/></svg>
<svg style="left:1121px;top:31px" width="16" height="16" viewBox="0 0 16 16"><path d="M3 9v5 M0.500 12l2.500 2.800 2.500-2.800" fill="none" stroke="#1430e6" stroke-width="1.800"/><path d="M4 5.500h12 M4 8.500h12 M7 11.500h9 M7 14.500h9" stroke="#5e6286"/></svg>
<svg style="left:1144px;top:31px" width="16" height="16" viewBox="0 0 16 16"><path d="M0 12.500h5 M3 10l2.800 2.500-2.800 2.500" fill="none" stroke="#1430e6" stroke-width="1.800"/><path d="M4 5.500h12 M4 8.500h12 M7 11.500h9 M7 14.500h9" stroke="#5e6286"/></svg>
<svg style="left:1180px;top:31px" width="16" height="16" viewBox="0 0 16 16"><path d="M5 2.500a6.500 6.500 0 0 1 8.500 9.500" fill="none" stroke="#8aa0a0" stroke-width="1.600"/><path d="M13.500 12l1.500 2" stroke="#b87a3a" stroke-width="1.600"/><path d="M1.500 13.500l8-8" stroke="#c88a4a" stroke-width="2"/><path d="M5.500 2.500l5 1 2 3-2 0.300-2.500-2.300-2.500-0.500z" fill="#5a5a5a"/><path d="M1 14.500l2-1" stroke="#8aa0a0" stroke-width="1.600"/></svg>
<svg style="left:1203px;top:31px" width="16" height="16" viewBox="0 0 16 16"><path d="M0.500 5.500l8 0.500v6h-8z" fill="#1e5ee0"/><path d="M0.500 5.500l8 0.500" stroke="#5a8af0"/><path d="M8.500 5.500h3.500l3.500 3.500v3.500h-7z" fill="#f0a038"/><path d="M10 6.500h2l1.800 2.200h-3.800z" fill="#d6ecff"/><rect x="0.500" y="11.500" width="15" height="1.500" fill="#2a2a5a"/><circle cx="3.500" cy="13.300" r="1.800" fill="#1a1a1a"/><circle cx="12" cy="13.300" r="1.800" fill="#1a1a1a"/><circle cx="3.500" cy="13.300" r="0.700" fill="#d0d0d0"/><circle cx="12" cy="13.300" r="0.700" fill="#d0d0d0"/></svg>
<svg style="left:1226px;top:31px" width="16" height="16" viewBox="0 0 16 16"><rect x="5.6" y="4" width="4.800" height="2.600" rx="0.800" fill="#f57a10" stroke="#c85a00" stroke-width="0.600"/><rect x="3" y="6.7" width="4.800" height="2.600" rx="0.800" fill="#f57a10" stroke="#c85a00" stroke-width="0.600"/><rect x="8.2" y="6.7" width="4.800" height="2.600" rx="0.800" fill="#f57a10" stroke="#c85a00" stroke-width="0.600"/><rect x="0.5" y="9.4" width="4.800" height="2.600" rx="0.800" fill="#f57a10" stroke="#c85a00" stroke-width="0.600"/><rect x="5.6" y="9.4" width="4.800" height="2.600" rx="0.800" fill="#f57a10" stroke="#c85a00" stroke-width="0.600"/><rect x="10.7" y="9.4" width="4.800" height="2.600" rx="0.800" fill="#f57a10" stroke="#c85a00" stroke-width="0.600"/></svg>
<svg style="left:1255px;top:31px" width="16" height="16" viewBox="0 0 16 16"><path d="M1 6.500h8v5.500h-8z" fill="#1e5ee0"/><path d="M2 6.500c1-3 5-3 6 0z" fill="#f57a10"/><path d="M9 5.500h3.500l3 3.500v3h-6.500z" fill="#f0a038"/><path d="M10.300 6.500h2l1.800 2.200h-3.800z" fill="#d6ecff"/><rect x="0.500" y="11.500" width="15" height="1.500" fill="#2a2a5a"/><circle cx="3.800" cy="13.300" r="1.800" fill="#1a1a1a"/><circle cx="12" cy="13.300" r="1.800" fill="#1a1a1a"/><circle cx="3.800" cy="13.300" r="0.700" fill="#d0d0d0"/><circle cx="12" cy="13.300" r="0.700" fill="#d0d0d0"/></svg>
<svg style="left:1291px;top:31px" width="16" height="16" viewBox="0 0 16 16"><path d="M1 10.500l8-3 6.500 2.500-8.500 4z" fill="#fff" stroke="#e8404a" stroke-width="0.900"/><path d="M1 10.500v2l6 3 8.500-4v-1.800" fill="#fff" stroke="#e8404a" stroke-width="0.900"/><path d="M2 5.500l8-3 5.500 2.500-8.500 3.500z" fill="#f0589e" stroke="#c83a7a" stroke-width="0.600"/><path d="M2 5.500v2.300l5 2.700 8.500-3.500v-2.500l-8.500 3.500z" fill="#fff" stroke="#c83a7a" stroke-width="0.700"/><path d="M2 7.800l5 2.700 8.500-3.500" fill="none" stroke="#f0589e" stroke-width="1.100"/></svg>
<svg style="left:1314px;top:31px" width="16" height="16" viewBox="0 0 16 16"><path d="M1 10.500l8-3 6.500 2.500-8.500 4z" fill="#fff" stroke="#4aa8f0" stroke-width="0.900"/><path d="M1 10.500v2l6 3 8.500-4v-1.800" fill="#fff" stroke="#4aa8f0" stroke-width="0.900"/><path d="M2 5.500l8-3 5.500 2.500-8.500 3.500z" fill="#2f50d8" stroke="#1d3aa8" stroke-width="0.600"/><path d="M2 5.500v2.300l5 2.700 8.500-3.500v-2.500l-8.500 3.500z" fill="#fff" stroke="#1d3aa8" stroke-width="0.700"/><path d="M2 7.800l5 2.700 8.500-3.500" fill="none" stroke="#2f50d8" stroke-width="1.100"/></svg>
<svg style="left:114px;top:109px" width="16" height="16" viewBox="0 0 16 16"><path d="M0.500 3l1-1.500h5l1.500 2h7.500v11h-15z" fill="#c8c8c8" stroke="#9a9a9a"/><path d="M0.500 5.500h15" stroke="#e0e0e0"/><path d="M6 11.500h5 M6 11.500v-4 M4 9.500l2-2.300 2 2.300" fill="none" stroke="#7e7e7e" stroke-width="1.200"/></svg>
<svg style="left:137px;top:109px" width="16" height="16" viewBox="0 0 16 16"><defs><linearGradient id="gg" x1="0" y1="0" x2="0" y2="1"><stop offset="0" stop-color="#b6f07a"/><stop offset="1" stop-color="#7ee03a"/></linearGradient></defs><path d="M0.500 3l1-1.500h5l1.500 2h7.500v11h-15z" fill="url(#gg)" stroke="#8a9a7a"/><rect x="6" y="8.300" width="4.500" height="1.500" fill="#2a3a1a"/></svg>
<svg style="left:173px;top:109px" width="16" height="16" viewBox="0 0 16 16"><g transform="translate(0.900,0.700) scale(0.900)"><path d="M2.900 4.300A6.600 6.100 0 0 0 7.600 14" fill="none" stroke="#23a01f" stroke-width="2.3"/><path d="M7.100 1.800l-5.600 0.300 2.700 4.600z" fill="#23a01f"/><path d="M9.300 2A6.600 6.100 0 0 1 13.200 11.800" fill="none" stroke="#23a01f" stroke-width="2.3"/><path d="M9 14.200l5.400-0.900-2.600-3.100z" fill="#0e7c0e"/></g></svg>
<svg style="left:202px;top:109px" width="16" height="16" viewBox="0 0 16 16"><rect x="1" y="8" width="4" height="8" fill="#2f6fd6"/><rect x="5" y="4" width="5" height="12" fill="#3f82e6"/><rect x="10" y="7" width="5" height="9" fill="#2f6fd6"/><path d="M2 10h2 M2 12h2 M2 14h2 M6 6h3 M6 8h3 M6 10h3 M6 12h3 M6 14h3 M11 9h3 M11 11h3 M11 13h3" stroke="#dcebff" stroke-dasharray="1 0.600"/><path d="M6.500 4v-3" stroke="#2f2f2f" stroke-width="0.700"/><path d="M8 0h7v7h-7z" fill="#ff8c1a"/><path d="M12.8 4.8l0.8 0.8 M12.8 2.2l0.8 -0.8 M10.2 4.8l-0.8 0.8 M10.2 2.2l-0.8 -0.8 M13.3 3.5l0.8 0.0 M9.7 3.5l-0.8 0.0 M11.5 5.3l0.0 0.8 M11.5 1.7l0.0 -0.8 " stroke="#fff" stroke-width="1.100"/><circle cx="11.5" cy="3.5" r="1.900" fill="#fff"/><circle cx="11.5" cy="3.5" r="0.900" fill="#ff8c1a"/></svg>
<svg style="left:225px;top:109px" width="16" height="16" viewBox="0 0 16 16"><rect x="1.500" y="1.500" width="5" height="13" fill="#ececec" stroke="#b4b4b4"/><rect x="9.500" y="7.500" width="5" height="7" fill="#ececec" stroke="#a8a8a8"/><path d="M2.500 3.500h3 M2.500 5.500h3 M2.500 7.500h3 M2.500 9.500h3 M2.500 11.500h3 M10.500 9.500h3 M10.500 11.500h3" stroke="#c0c0c0"/><path d="M9 0h7v7h-7z" fill="#9c9c9c"/><path d="M13.8 4.8l0.8 0.8 M13.8 2.2l0.8 -0.8 M11.2 4.8l-0.8 0.8 M11.2 2.2l-0.8 -0.8 M14.3 3.5l0.8 0.0 M10.7 3.5l-0.8 0.0 M12.5 5.3l0.0 0.8 M12.5 1.7l0.0 -0.8 " stroke="#fff" stroke-width="1.100"/><circle cx="12.5" cy="3.5" r="1.900" fill="#fff"/><circle cx="12.5" cy="3.5" r="0.900" fill="#9c9c9c"/></svg>
<svg style="left:248px;top:109px" width="16" height="16" viewBox="0 0 16 16"><rect x="4.500" y="4.500" width="6" height="11" fill="#ececec" stroke="#b4b4b4"/><path d="M5.500 7.500h4 M5.500 9.500h4 M5.500 11.500h4 M5.500 13.500h4" stroke="#c0c0c0"/><path d="M8 0h7v7h-7z" fill="#9c9c9c"/><path d="M12.8 4.8l0.8 0.8 M12.8 2.2l0.8 -0.8 M10.2 4.8l-0.8 0.8 M10.2 2.2l-0.8 -0.8 M13.3 3.5l0.8 0.0 M9.7 3.5l-0.8 0.0 M11.5 5.3l0.0 0.8 M11.5 1.7l0.0 -0.8 " stroke="#fff" stroke-width="1.100"/><circle cx="11.5" cy="3.5" r="1.900" fill="#fff"/><circle cx="11.5" cy="3.5" r="0.900" fill="#9c9c9c"/></svg>
<svg style="left:271px;top:109px" width="16" height="16" viewBox="0 0 16 16"><rect x="1" y="2" width="3.500" height="14" fill="#7e7e7e"/><path d="M1.800 3.500h2 M1.800 6h2 M1.800 8.500h2 M1.800 11h2 M1.800 13.500h2" stroke="#f0f0f0" stroke-width="1.200"/><circle cx="1.500" cy="1" r="1" fill="#9a4ad0"/><path d="M4 8l6-5" stroke="#c04ad0" stroke-width="1.400"/><rect x="3.500" y="8" width="11.500" height="2.400" fill="#f0601e"/><rect x="7" y="10.500" width="8" height="5.500" fill="#2f7ae0"/><path d="M8 12h6 M8 14h6" stroke="#cfe6ff" stroke-dasharray="1.200 0.800"/><path d="M9 0h7v7h-7z" fill="#ff8c1a"/><path d="M13.8 4.8l0.8 0.8 M13.8 2.2l0.8 -0.8 M11.2 4.8l-0.8 0.8 M11.2 2.2l-0.8 -0.8 M14.3 3.5l0.8 0.0 M10.7 3.5l-0.8 0.0 M12.5 5.3l0.0 0.8 M12.5 1.7l0.0 -0.8 " stroke="#fff" stroke-width="1.100"/><circle cx="12.5" cy="3.5" r="1.900" fill="#fff"/><circle cx="12.5" cy="3.5" r="0.900" fill="#ff8c1a"/></svg>
<svg style="left:294px;top:109px" width="16" height="16" viewBox="0 0 16 16"><rect x="1" y="2" width="3.500" height="14" fill="#7e7e7e"/><path d="M1.800 3.500h2 M1.800 6h2 M1.800 8.500h2 M1.800 11h2 M1.800 13.500h2" stroke="#f0f0f0" stroke-width="1.200"/><circle cx="1.500" cy="1" r="1" fill="#9a4ad0"/><path d="M4 7l6-4" stroke="#c04ad0" stroke-width="1.400"/><rect x="3.500" y="6.500" width="11.500" height="2.200" fill="#f0601e"/><rect x="6" y="9" width="8" height="3.200" rx="1" fill="#2f8af0"/><path d="M10 12v2h-3" fill="none" stroke="#1a1a1a"/><rect x="6" y="13.500" width="2" height="2.500" fill="#e02020"/><path d="M10 12.500h5v3.500h-5" fill="#2f7ae0"/><path d="M9 0h7v7h-7z" fill="#ff8c1a"/><path d="M13.8 4.8l0.8 0.8 M13.8 2.2l0.8 -0.8 M11.2 4.8l-0.8 0.8 M11.2 2.2l-0.8 -0.8 M14.3 3.5l0.8 0.0 M10.7 3.5l-0.8 0.0 M12.5 5.3l0.0 0.8 M12.5 1.7l0.0 -0.8 " stroke="#fff" stroke-width="1.100"/><circle cx="12.5" cy="3.5" r="1.900" fill="#fff"/><circle cx="12.5" cy="3.5" r="0.900" fill="#ff8c1a"/></svg>
<svg style="left:317px;top:109px" width="16" height="16" viewBox="0 0 16 16"><path d="M0.500 10l4-7.500 9 1 2 5-6 6.500z" fill="#8e8e8e"/><path d="M3 5c2-3 5-3 6-0.500" fill="none" stroke="#c8c8c8" stroke-width="1.500"/><path d="M0.500 10l1 2.500 8 3.500 6-7" fill="#c4c4c4" stroke="#8a8a8a" stroke-width="0.700"/><path d="M9 0h7v7h-7z" fill="#9c9c9c"/><path d="M13.8 4.8l0.8 0.8 M13.8 2.2l0.8 -0.8 M11.2 4.8l-0.8 0.8 M11.2 2.2l-0.8 -0.8 M14.3 3.5l0.8 0.0 M10.7 3.5l-0.8 0.0 M12.5 5.3l0.0 0.8 M12.5 1.7l0.0 -0.8 " stroke="#fff" stroke-width="1.100"/><circle cx="12.5" cy="3.5" r="1.900" fill="#fff"/><circle cx="12.5" cy="3.5" r="0.900" fill="#9c9c9c"/></svg>
<svg style="left:340px;top:109px" width="16" height="16" viewBox="0 0 16 16"><path d="M1 9c0-5 4-8 8-7l4 4 2 4-3 4h-8z" fill="#a4a4a4"/><path d="M4 5c2-2.500 4-2.500 5-0.500" fill="none" stroke="#d4d4d4" stroke-width="1.400"/><rect x="3.500" y="9.500" width="9" height="3.500" rx="1" fill="#e8e8e8" stroke="#7e7e7e"/><path d="M5 14.500h7" stroke="#7e7e7e" stroke-width="1.300"/><path d="M9 0h7v7h-7z" fill="#9c9c9c"/><path d="M13.8 4.8l0.8 0.8 M13.8 2.2l0.8 -0.8 M11.2 4.8l-0.8 0.8 M11.2 2.2l-0.8 -0.8 M14.3 3.5l0.8 0.0 M10.7 3.5l-0.8 0.0 M12.5 5.3l0.0 0.8 M12.5 1.7l0.0 -0.8 " stroke="#fff" stroke-width="1.100"/><circle cx="12.5" cy="3.5" r="1.900" fill="#fff"/><circle cx="12.5" cy="3.5" r="0.900" fill="#9c9c9c"/></svg>
<svg style="left:370px;top:109px" width="16" height="16" viewBox="0 0 16 16"><path d="M2.500 15.500v-7l5-4.500 5 4.500v7z" fill="#fffaf0" stroke="#c89a6a" stroke-width="0.800"/><path d="M0.500 9l7-6.500 7 6.500" fill="none" stroke="#d8742a" stroke-width="1.250"/><rect x="2.200" y="2.500" width="1.500" height="3.500" fill="#d8742a"/><rect x="7.500" y="9" width="3.500" height="3.500" fill="#5a9af0" stroke="#2f6ac8" stroke-width="0.600"/><rect x="3.500" y="10.500" width="2.500" height="5" fill="#f0a030"/><path d="M9 0h7v7h-7z" fill="#ff8c1a"/><path d="M13.8 4.8l0.8 0.8 M13.8 2.2l0.8 -0.8 M11.2 4.8l-0.8 0.8 M11.2 2.2l-0.8 -0.8 M14.3 3.5l0.8 0.0 M10.7 3.5l-0.8 0.0 M12.5 5.3l0.0 0.8 M12.5 1.7l0.0 -0.8 " stroke="#fff" stroke-width="1.100"/><circle cx="12.5" cy="3.5" r="1.900" fill="#fff"/><circle cx="12.5" cy="3.5" r="0.900" fill="#ff8c1a"/></svg>
<svg style="left:393px;top:109px" width="16" height="16" viewBox="0 0 16 16"><path d="M2.500 15.500v-7l5-4.500 5 4.500v7z" fill="#fffaf0" stroke="#c89a6a" stroke-width="0.800"/><path d="M0.500 9l7-6.500 7 6.500" fill="none" stroke="#d8742a" stroke-width="1.250"/><rect x="2.200" y="2.500" width="1.500" height="3.500" fill="#d8742a"/><rect x="7.500" y="9" width="3.500" height="3.500" fill="#5a9af0" stroke="#2f6ac8" stroke-width="0.600"/><rect x="3.500" y="10.500" width="2.500" height="5" fill="#f0a030"/><rect x="5" y="8" width="8" height="3" rx="1" fill="#2f8af0"/><path d="M9 11v2h-3v1" fill="none" stroke="#1a1a1a" stroke-width="0.900"/><rect x="4.500" y="13.500" width="3" height="2" fill="#e02020"/><path d="M9 0h7v7h-7z" fill="#ff8c1a"/><path d="M13.8 4.8l0.8 0.8 M13.8 2.2l0.8 -0.8 M11.2 4.8l-0.8 0.8 M11.2 2.2l-0.8 -0.8 M14.3 3.5l0.8 0.0 M10.7 3.5l-0.8 0.0 M12.5 5.3l0.0 0.8 M12.5 1.7l0.0 -0.8 " stroke="#fff" stroke-width="1.100"/><circle cx="12.5" cy="3.5" r="1.900" fill="#fff"/><circle cx="12.5" cy="3.5" r="0.900" fill="#ff8c1a"/></svg>
<svg style="left:422px;top:109px" width="16" height="16" viewBox="0 0 16 16"><rect x="1.500" y="1.500" width="14" height="13" fill="#fff" stroke="#8e8e8e"/><text x="10" y="13.600" font-size="8.5" text-anchor="middle" fill="#000" font-family="Liberation Sans">P</text><path d="M0 0h7v7h-7z" fill="#9c9c9c"/><path d="M4.8 4.8l0.8 0.8 M4.8 2.2l0.8 -0.8 M2.2 4.8l-0.8 0.8 M2.2 2.2l-0.8 -0.8 M5.3 3.5l0.8 0.0 M1.7 3.5l-0.8 0.0 M3.5 5.3l0.0 0.8 M3.5 1.7l0.0 -0.8 " stroke="#fff" stroke-width="1.100"/><circle cx="3.5" cy="3.5" r="1.900" fill="#fff"/><circle cx="3.5" cy="3.5" r="0.900" fill="#9c9c9c"/></svg>
<svg style="left:445px;top:109px" width="16" height="16" viewBox="0 0 16 16"><rect x="1.500" y="1.500" width="14" height="13" fill="#fff" stroke="#8e8e8e"/><text x="9" y="13.600" font-size="8" text-anchor="middle" fill="#000" font-family="Liberation Sans">ПР</text><path d="M0 0h7v7h-7z" fill="#9c9c9c"/><path d="M4.8 4.8l0.8 0.8 M4.8 2.2l0.8 -0.8 M2.2 4.8l-0.8 0.8 M2.2 2.2l-0.8 -0.8 M5.3 3.5l0.8 0.0 M1.7 3.5l-0.8 0.0 M3.5 5.3l0.0 0.8 M3.5 1.7l0.0 -0.8 " stroke="#fff" stroke-width="1.100"/><circle cx="3.5" cy="3.5" r="1.900" fill="#fff"/><circle cx="3.5" cy="3.5" r="0.900" fill="#9c9c9c"/></svg>
<svg style="left:467px;top:109px" width="16" height="16" viewBox="0 0 16 16"><path d="M8 2l5.500 6.500h-3.500v6h-4v-6h-3.500z" fill="#9c9c9c"/></svg>
<svg style="left:490px;top:109px" width="16" height="16" viewBox="0 0 16 16"><path d="M8 14.500l5.500-6.500h-3.500v-6h-4v6h-3.500z" fill="#9c9c9c"/></svg>
<svg style="left:519px;top:109px" width="16" height="16" viewBox="0 0 16 16"><path d="M4.500 9v-4l3.500-3.500 3.500 3.500v4z" fill="#fff" stroke="#c89a6a" stroke-width="0.700"/><path d="M3.500 5.500l4.500-4.500 4.500 4.500" fill="none" stroke="#8a3a1a" stroke-width="1.300"/><rect x="7" y="4.500" width="2.500" height="2.500" fill="#8ab4f0"/><path d="M1 15.500v-4l3-3 3 3v4z M9 15.500v-4l3-3 3 3v4z" fill="#fff" stroke="#c89a6a" stroke-width="0.700"/><path d="M0.300 11.500l3.700-3.700 3.700 3.700 M8.300 11.500l3.700-3.700 3.700 3.700" fill="none" stroke="#c85a10" stroke-width="1.300"/><path d="M3 15.500v-2.500h2v2.500 M11 15.500v-2.500h2v2.500" fill="#f0a04a" stroke="#e0701a" stroke-width="0.700"/></svg>
<svg style="left:542px;top:109px" width="16" height="16" viewBox="0 0 16 16"><rect x="3.500" y="2.500" width="11" height="11" fill="#b0b0b0" stroke="#a0a0a0"/><rect x="0.500" y="5.500" width="11" height="10" fill="#a2a2a2" stroke="#949494"/><text x="6" y="14" font-size="9" text-anchor="middle" fill="#dcdcdc" font-family="Liberation Sans">%</text><path d="M9 0h7v7h-7z" fill="#9c9c9c"/><path d="M13.8 4.8l0.8 0.8 M13.8 2.2l0.8 -0.8 M11.2 4.8l-0.8 0.8 M11.2 2.2l-0.8 -0.8 M14.3 3.5l0.8 0.0 M10.7 3.5l-0.8 0.0 M12.5 5.3l0.0 0.8 M12.5 1.7l0.0 -0.8 " stroke="#fff" stroke-width="1.100"/><circle cx="12.5" cy="3.5" r="1.900" fill="#fff"/><circle cx="12.5" cy="3.5" r="0.900" fill="#9c9c9c"/></svg>
<svg style="left:571px;top:109px" width="16" height="16" viewBox="0 0 16 16"><rect x="0.500" y="3.500" width="13" height="12" fill="#b8b8b8" stroke="#9a9a9a"/><path d="M1 4.500h12" stroke="#dadada"/><text x="6" y="14.300" font-size="11" text-anchor="middle" fill="#4a4a4a" font-family="Liberation Sans">%</text><path d="M9 0h7v7h-7z" fill="#9c9c9c"/><path d="M13.8 4.8l0.8 0.8 M13.8 2.2l0.8 -0.8 M11.2 4.8l-0.8 0.8 M11.2 2.2l-0.8 -0.8 M14.3 3.5l0.8 0.0 M10.7 3.5l-0.8 0.0 M12.5 5.3l0.0 0.8 M12.5 1.7l0.0 -0.8 " stroke="#fff" stroke-width="1.100"/><circle cx="12.5" cy="3.5" r="1.900" fill="#fff"/><circle cx="12.5" cy="3.5" r="0.900" fill="#9c9c9c"/></svg>
<svg style="left:594px;top:109px" width="16" height="16" viewBox="0 0 16 16"><rect x="0.500" y="3.500" width="13" height="12" fill="#b8b8b8" stroke="#9a9a9a"/><path d="M1 4.500h12" stroke="#dadada"/><text x="7" y="14.300" font-size="7.5" text-anchor="middle" fill="#4a4a4a" font-family="Liberation Sans">M29</text><path d="M9 0h7v7h-7z" fill="#9c9c9c"/><path d="M13.8 4.8l0.8 0.8 M13.8 2.2l0.8 -0.8 M11.2 4.8l-0.8 0.8 M11.2 2.2l-0.8 -0.8 M14.3 3.5l0.8 0.0 M10.7 3.5l-0.8 0.0 M12.5 5.3l0.0 0.8 M12.5 1.7l0.0 -0.8 " stroke="#fff" stroke-width="1.100"/><circle cx="12.5" cy="3.5" r="1.900" fill="#fff"/><circle cx="12.5" cy="3.5" r="0.900" fill="#9c9c9c"/></svg>
<svg style="left:617px;top:109px" width="16" height="16" viewBox="0 0 16 16"><rect x="0.500" y="3.500" width="13" height="12" fill="#b8b8b8" stroke="#9a9a9a"/><path d="M1 4.500h12" stroke="#dadada"/><text x="6.5" y="14.300" font-size="9" text-anchor="middle" fill="#4a4a4a" font-family="Liberation Sans">PP</text><path d="M9 0h7v7h-7z" fill="#9c9c9c"/><path d="M13.8 4.8l0.8 0.8 M13.8 2.2l0.8 -0.8 M11.2 4.8l-0.8 0.8 M11.2 2.2l-0.8 -0.8 M14.3 3.5l0.8 0.0 M10.7 3.5l-0.8 0.0 M12.5 5.3l0.0 0.8 M12.5 1.7l0.0 -0.8 " stroke="#fff" stroke-width="1.100"/><circle cx="12.5" cy="3.5" r="1.900" fill="#fff"/><circle cx="12.5" cy="3.5" r="0.900" fill="#9c9c9c"/></svg>
<svg style="left:640px;top:109px" width="16" height="16" viewBox="0 0 16 16"><rect x="0.500" y="3.500" width="13" height="12" fill="#b8b8b8" stroke="#9a9a9a"/><path d="M1 4.500h12" stroke="#dadada"/><text x="6.5" y="14.300" font-size="9" text-anchor="middle" fill="#4a4a4a" font-family="Liberation Sans">ФЗ</text><path d="M9 0h7v7h-7z" fill="#9c9c9c"/><path d="M13.8 4.8l0.8 0.8 M13.8 2.2l0.8 -0.8 M11.2 4.8l-0.8 0.8 M11.2 2.2l-0.8 -0.8 M14.3 3.5l0.8 0.0 M10.7 3.5l-0.8 0.0 M12.5 5.3l0.0 0.8 M12.5 1.7l0.0 -0.8 " stroke="#fff" stroke-width="1.100"/><circle cx="12.5" cy="3.5" r="1.900" fill="#fff"/><circle cx="12.5" cy="3.5" r="0.900" fill="#9c9c9c"/></svg>
<svg style="left:669px;top:109px" width="16" height="16" viewBox="0 0 16 16"><defs><linearGradient id="fy" x1="0" y1="0" x2="0" y2="1"><stop offset="0" stop-color="#fff08a"/><stop offset="1" stop-color="#ffc81e"/></linearGradient></defs><path d="M0.500 3l1-1.500h5l1.500 2h7.500v11h-15z" fill="url(#fy)" stroke="#e0b02a"/><path d="M9 0h7v7h-7z" fill="#ff8c1a"/><path d="M13.8 4.8l0.8 0.8 M13.8 2.2l0.8 -0.8 M11.2 4.8l-0.8 0.8 M11.2 2.2l-0.8 -0.8 M14.3 3.5l0.8 0.0 M10.7 3.5l-0.8 0.0 M12.5 5.3l0.0 0.8 M12.5 1.7l0.0 -0.8 " stroke="#fff" stroke-width="1.100"/><circle cx="12.5" cy="3.5" r="1.900" fill="#fff"/><circle cx="12.5" cy="3.5" r="0.900" fill="#ff8c1a"/></svg>
<svg style="left:698px;top:109px" width="16" height="16" viewBox="0 0 16 16"><path d="M3 3l10.500 10 M13.500 3l-10.500 10" stroke="#a4a4a4" stroke-width="1.400"/></svg>
<div style="left:1px;top:131px;width:63px;height:1px;background:#fff"></div>
<div style="left:1px;top:131px;width:1px;height:20px;background:#fff"></div>
<div style="left:64px;top:131px;width:1px;height:20px;background:#a0a0a0"></div>
<div style="left:65px;top:131px;width:1px;height:20px;background:#696969"></div>
<span style="left:7.20px;top:131.84px;transform:scaleX(0.9089);transform-origin:0 0;font-size:12px;line-height:16px;color:#000;">Структура</span>
<div style="left:66px;top:150px;width:449px;height:1px;background:#fff"></div>
<div style="left:515px;top:150px;width:1px;height:938px;background:#a0a0a0"></div>
<div style="left:516px;top:150px;width:1px;height:938px;background:#696969"></div>
<div style="left:2px;top:1086px;width:515px;height:1px;background:#a0a0a0"></div>
<div style="left:2px;top:1087px;width:515px;height:1px;background:#696969"></div>
<div style="left:3px;top:154px;width:510px;height:930px;background:#fff"></div>
<div style="left:3px;top:154px;width:510px;height:1px;background:#a0a0a0"></div>
<div style="left:3px;top:154px;width:1px;height:930px;background:#a0a0a0"></div>
<div style="left:4px;top:155px;width:508px;height:1px;background:#696969"></div>
<div style="left:4px;top:155px;width:1px;height:928px;background:#696969"></div>
<div style="left:4px;top:1083px;width:509px;height:1px;background:#fff"></div>
<div style="left:512px;top:155px;width:1px;height:929px;background:#fff"></div>
<div style="left:5px;top:1082px;width:507px;height:1px;background:#e3e3e3"></div>
<div style="left:511px;top:156px;width:1px;height:927px;background:#e3e3e3"></div>
<svg style="left:9px;top:160px" width="9" height="9" viewBox="0 0 9 9"><rect x="0.5" y="0.5" width="8" height="8" fill="#fff" stroke="#848484"/><path d="M2 4.5h5 M4.5 2v5" stroke="#000"/></svg>
<svg style="left:18px;top:164px" width="6" height="1" viewBox="0 0 6 1"><path d="M0 0.5h6" stroke="#808080" stroke-dasharray="1 1"/></svg>
<svg style="left:24px;top:157px" width="16" height="16" viewBox="0 0 16 16"><path d="M0.500 14.500l5-13.500 5 13.500z" fill="#2f74d6" stroke="#1f4fa0" stroke-width="0.600"/><rect x="9" y="6.500" width="6.500" height="7" fill="#86c82e" stroke="#5a9a1a" stroke-width="0.700"/><circle cx="7" cy="11" r="3.800" fill="#f0482e"/><ellipse cx="6.500" cy="9.300" rx="2" ry="1.100" fill="#ffb0a0"/></svg>
<div style="left:43px;top:156px;width:49px;height:16px;background:#f0f0f0"></div>
<span style="left:45.40px;top:155.84px;transform:scaleX(0.9303);transform-origin:0 0;font-size:12px;line-height:16px;color:#000;">Проекты</span>
<div style="left:520px;top:130px;width:1px;height:958px;background:#fff"></div>
<div style="left:521px;top:130px;width:1px;height:958px;background:#fff"></div>
<div style="left:522px;top:131px;width:1px;height:954px;background:#e3e3e3"></div>
<span style="left:528.90px;top:133.34px;transform:scaleX(0.9096);transform-origin:0 0;font-size:12px;line-height:16px;color:#000;">Содержание</span>
<span style="left:603.90px;top:135.34px;transform:scaleX(0.9309);transform-origin:0 0;font-size:12px;line-height:16px;color:#000;">Параметры</span>
<span style="left:674.90px;top:135.34px;transform:scaleX(0.9403);transform-origin:0 0;font-size:12px;line-height:16px;color:#000;">Объектная смета</span>
<span style="left:776.90px;top:135.34px;transform:scaleX(0.8771);transform-origin:0 0;font-size:12px;line-height:16px;color:#000;">ССР и СЗ</span>
<span style="left:836.15px;top:135.34px;transform:scaleX(0.9281);transform-origin:0 0;font-size:12px;line-height:16px;color:#000;">НМЦК</span>
<span style="left:879.40px;top:135.34px;transform:scaleX(0.9338);transform-origin:0 0;font-size:12px;line-height:16px;color:#000;">ВОР</span>
<span style="left:921.40px;top:135.34px;transform:scaleX(0.9184);transform-origin:0 0;font-size:12px;line-height:16px;color:#000;">Исполнение Сметы контракта (ЕИС)</span>
<div style="left:523px;top:132px;width:76px;height:1px;background:#fff"></div>
<div style="left:523px;top:132px;width:1px;height:20px;background:#fff"></div>
<div style="left:598px;top:133px;width:1px;height:19px;background:#a0a0a0"></div>
<div style="left:599px;top:133px;width:1px;height:19px;background:#696969"></div>
<div style="left:601px;top:134px;width:66px;height:1px;background:#fff"></div>
<div style="left:667px;top:135px;width:1px;height:16px;background:#a0a0a0"></div>
<div style="left:668px;top:136px;width:1px;height:15px;background:#696969"></div>
<div style="left:669px;top:135px;width:1px;height:16px;background:#fff"></div>
<div style="left:670px;top:134px;width:99px;height:1px;background:#fff"></div>
<div style="left:769px;top:135px;width:1px;height:16px;background:#a0a0a0"></div>
<div style="left:770px;top:136px;width:1px;height:15px;background:#696969"></div>
<div style="left:771px;top:135px;width:1px;height:16px;background:#fff"></div>
<div style="left:772px;top:134px;width:56px;height:1px;background:#fff"></div>
<div style="left:828px;top:135px;width:1px;height:16px;background:#a0a0a0"></div>
<div style="left:829px;top:136px;width:1px;height:15px;background:#696969"></div>
<div style="left:830px;top:135px;width:1px;height:16px;background:#fff"></div>
<div style="left:831px;top:134px;width:42px;height:1px;background:#fff"></div>
<div style="left:873px;top:135px;width:1px;height:16px;background:#a0a0a0"></div>
<div style="left:874px;top:136px;width:1px;height:15px;background:#696969"></div>
<div style="left:875px;top:135px;width:1px;height:16px;background:#fff"></div>
<div style="left:876px;top:134px;width:38px;height:1px;background:#fff"></div>
<div style="left:914px;top:135px;width:1px;height:16px;background:#a0a0a0"></div>
<div style="left:915px;top:136px;width:1px;height:15px;background:#696969"></div>
<div style="left:916px;top:135px;width:1px;height:16px;background:#fff"></div>
<div style="left:917px;top:134px;width:195px;height:1px;background:#fff"></div>
<div style="left:1112px;top:135px;width:1px;height:16px;background:#a0a0a0"></div>
<div style="left:1113px;top:136px;width:1px;height:15px;background:#696969"></div>
<div style="left:600px;top:151px;width:1159px;height:1px;background:#fff"></div>
<div style="left:600px;top:152px;width:1159px;height:1px;background:#e3e3e3"></div>
<div style="left:1759px;top:151px;width:1px;height:937px;background:#a0a0a0"></div>
<div style="left:1760px;top:151px;width:1px;height:937px;background:#696969"></div>
<div style="left:521px;top:1085px;width:1240px;height:1px;background:#a0a0a0"></div>
<div style="left:521px;top:1086px;width:1240px;height:1px;background:#696969"></div>
<div style="left:521px;top:1087px;width:1240px;height:1px;background:#696969"></div>
<div style="left:525px;top:155px;width:1231px;height:927px;background:#fff;border:1px solid #a0a0a0"></div>
<div style="left:523px;top:1083px;width:1235px;height:1px;background:#fff"></div>
<div style="left:527px;top:157px;width:1227px;height:17px;background:#f0f0f0"></div>
<div style="left:527px;top:157px;width:1227px;height:1px;background:#fff"></div>
<div style="left:527px;top:157px;width:1px;height:17px;background:#fff"></div>
<div style="left:528px;top:172px;width:1226px;height:1px;background:#a0a0a0"></div>
<div style="left:527px;top:173px;width:1227px;height:1px;background:#696969"></div>
<div style="left:1752px;top:158px;width:1px;height:15px;background:#a0a0a0"></div>
<div style="left:1753px;top:157px;width:1px;height:17px;background:#696969"></div>
<span style="left:533.40px;top:157.84px;transform:scaleX(0.9172);transform-origin:0 0;font-size:12px;line-height:16px;color:#000;">Наименование</span>
<span style="left:547.40px;top:176.84px;transform:scaleX(0.9335);transform-origin:0 0;font-size:12px;line-height:16px;color:#000;">Новая папка</span>
<span style="left:547.40px;top:193.84px;transform:scaleX(0.9288);transform-origin:0 0;font-size:12px;line-height:16px;color:#000;">Новый проект 9</span>
<span style="left:547.40px;top:210.84px;transform:scaleX(0.9263);transform-origin:0 0;font-size:12px;line-height:16px;color:#000;">Новый объект</span>
<span style="left:547.40px;top:227.84px;transform:scaleX(0.8729);transform-origin:0 0;font-size:12px;line-height:16px;color:#000;">ОБМЕН</span>
<span style="left:547.40px;top:244.84px;transform:scaleX(0.9215);transform-origin:0 0;font-size:12px;line-height:16px;color:#000;">КОРЗИНА</span>
<svg style="left:529px;top:177px" width="16" height="16" viewBox="0 0 16 16"><defs><linearGradient id="fg" x1="0" y1="1" x2="1" y2="0"><stop offset="0.2" stop-color="#ffff14"/><stop offset="1" stop-color="#ff8214"/></linearGradient></defs><path d="M0.500 0.500h6.500l1 2h7.500v11h-15z" fill="url(#fg)" stroke="#a4a4b6"/></svg>
<svg style="left:529px;top:194px" width="16" height="16" viewBox="0 0 16 16"><rect x="1" y="6" width="4" height="9.500" fill="#3b82e0" stroke="#1c4fa0" stroke-width="0.700"/><rect x="5" y="3" width="5" height="12.500" fill="#4a90e8" stroke="#1c4fa0" stroke-width="0.700"/><rect x="10" y="7" width="4.500" height="8.500" fill="#3b82e0" stroke="#1c4fa0" stroke-width="0.700"/><path d="M6.500 5.500h2 M6.500 8h2 M6.500 10.500h2 M6.500 13h2 M2.200 8.500h1.600 M2.200 11h1.600 M11.200 9.500h2 M11.200 12h2" stroke="#fff"/><path d="M7.500 3v-3" stroke="#333" stroke-width="0.700"/><path d="M7.500 0h3.500v2h-3.500z" fill="#e02020"/></svg>
<svg style="left:529px;top:211px" width="16" height="16" viewBox="0 0 16 16"><path d="M3 15.500v-7.500h10v7.500z" fill="#fff" stroke="#a08060" stroke-width="0.800"/><path d="M0.500 9l7.500-7.500 7.500 7.500" fill="none" stroke="#d8742a" stroke-width="1.300"/><rect x="2.200" y="1.500" width="1.800" height="4" fill="#e8924a"/><rect x="8.500" y="9.500" width="3.500" height="3.500" fill="#3b82e0"/><rect x="4" y="10" width="2.500" height="5.500" fill="#f0a030"/></svg>
<svg style="left:529px;top:228px" width="16" height="16" viewBox="0 0 16 16"><path d="M0.500 1.500h5l1.500 1.500h7.500v7.500h-14z" fill="#ffd84a" stroke="#c89a10"/><path d="M0.500 5.500h14v5h-14z" fill="#ffe680"/><path d="M0.500 11c3-2 7 0 9 0.500 2 0.500 4-1.500 5.500-1v2c-2 3-9 3.500-14.500 1z" fill="#f4a46a" stroke="#c8703a" stroke-width="0.700"/><path d="M15.500 8v6" stroke="#333"/></svg>
<svg style="left:529px;top:245px" width="16" height="16" viewBox="0 0 16 16"><defs><pattern id="mesh" width="2" height="2" patternUnits="userSpaceOnUse"><rect width="2" height="2" fill="#4e5e70"/><rect x="0.500" y="0.500" width="1" height="1" fill="#c4d0de"/></pattern></defs><path d="M5 3.500a3 3 0 0 1 6 0z" fill="#dce8f4" stroke="#8a9aaa" stroke-width="0.700"/><path d="M3 4.500h10" stroke="#4e5e70" stroke-width="1.400"/><path d="M4.500 5.500h7l-0.500 2h0.500v7h-7v-7h0.500z" fill="url(#mesh)"/><path d="M2.500 7.500h11" stroke="#4e5e70" stroke-width="1.200"/><path d="M3.500 15h9" stroke="#3a4a5a" stroke-width="1.200"/></svg>
<div style="left:371px;top:294px;width:1018px;height:501px;background:#fff;border:1px solid #6e6e6e"></div>
<span style="left:400.90px;top:301.84px;letter-spacing:-0.063px;font-size:12px;line-height:16px;color:#0a0a1e;">Сметные нормы дополнительных затрат при производстве работ в зимнее время</span>
<svg style="left:1367px;top:303px" width="12" height="12" viewBox="0 0 12 12"><path d="M1 1l10 10 M11 1l-10 10" stroke="#000" stroke-width="1.1" fill="none"/></svg>
<div style="left:372px;top:324px;width:1016px;height:428px;background:#f0f0f0"></div>
<div style="left:372px;top:346px;width:1014px;height:1px;background:#fff"></div>
<div style="left:372px;top:346px;width:1px;height:406px;background:#fff"></div>
<div style="left:1386px;top:345px;width:1px;height:408px;background:#a0a0a0"></div>
<div style="left:1387px;top:345px;width:1px;height:408px;background:#696969"></div>
<div style="left:372px;top:751px;width:1016px;height:1px;background:#a0a0a0"></div>
<div style="left:372px;top:752px;width:1016px;height:1px;background:#696969"></div>
<div style="left:372px;top:753px;width:1016px;height:41px;background:#f0f0f0"></div>
<div style="left:375px;top:328px;width:117px;height:1px;background:#fff"></div>
<div style="left:374px;top:329px;width:1px;height:17px;background:#fff"></div>
<div style="left:726px;top:329px;width:1px;height:17px;background:#a0a0a0"></div>
<div style="left:727px;top:330px;width:1px;height:16px;background:#696969"></div>
<div style="left:728px;top:329px;width:1px;height:17px;background:#fff"></div>
<div style="left:831px;top:329px;width:1px;height:17px;background:#a0a0a0"></div>
<div style="left:832px;top:330px;width:1px;height:16px;background:#696969"></div>
<div style="left:833px;top:329px;width:1px;height:17px;background:#fff"></div>
<div style="left:942px;top:329px;width:1px;height:17px;background:#a0a0a0"></div>
<div style="left:943px;top:330px;width:1px;height:16px;background:#696969"></div>
<div style="left:944px;top:329px;width:1px;height:17px;background:#fff"></div>
<div style="left:609px;top:328px;width:117px;height:1px;background:#fff"></div>
<div style="left:729px;top:328px;width:102px;height:1px;background:#fff"></div>
<div style="left:834px;top:328px;width:108px;height:1px;background:#fff"></div>
<span style="left:380.10px;top:328.84px;transform:scaleX(0.9155);transform-origin:0 0;font-size:12px;line-height:16px;color:#000;">325/пр Приложение 1</span>
<span style="left:611.40px;top:328.84px;transform:scaleX(0.9296);transform-origin:0 0;font-size:12px;line-height:16px;color:#000;">325/пр Приложение 2</span>
<span style="left:733.90px;top:328.84px;transform:scaleX(0.8893);transform-origin:0 0;font-size:12px;line-height:16px;color:#000;">ГСН 81-05-02-2007</span>
<span style="left:839.00px;top:328.84px;transform:scaleX(0.8801);transform-origin:0 0;font-size:12px;line-height:16px;color:#000;">ГСНр 81-05-02-2001</span>
<div style="left:496px;top:326px;width:108px;height:21px;background:#f0f0f0"></div>
<span style="left:503.15px;top:327.09px;transform:scaleX(0.9421);transform-origin:0 0;font-size:12px;line-height:16px;color:#000;">325/пр П1 (170/пр)</span>
<div style="left:493px;top:323px;width:114px;height:26px;border:3px solid #ff0000"></div>
<div style="left:376px;top:349px;width:988px;height:35px;background:#f0f0f0"></div>
<div style="left:376px;top:349px;width:988px;height:1px;background:#fff"></div>
<div style="left:376px;top:349px;width:1px;height:35px;background:#fff"></div>
<div style="left:376px;top:366px;width:988px;height:1px;background:#a0a0a0"></div>
<div style="left:376px;top:384px;width:988px;height:1px;background:#a0a0a0"></div>
<div style="left:376px;top:367px;width:988px;height:1px;background:#fff"></div>
<div style="left:851px;top:349px;width:1px;height:17px;background:#a0a0a0"></div>
<div style="left:852px;top:349px;width:1px;height:17px;background:#fff"></div>
<div style="left:1363px;top:349px;width:1px;height:36px;background:#a0a0a0"></div>
<div style="left:423px;top:369px;width:1px;height:15px;background:#a0a0a0"></div>
<div style="left:424px;top:369px;width:1px;height:15px;background:#fff"></div>
<div style="left:487px;top:369px;width:1px;height:15px;background:#a0a0a0"></div>
<div style="left:488px;top:369px;width:1px;height:15px;background:#fff"></div>
<div style="left:851px;top:369px;width:1px;height:15px;background:#a0a0a0"></div>
<div style="left:852px;top:369px;width:1px;height:15px;background:#fff"></div>
<div style="left:915px;top:369px;width:1px;height:15px;background:#a0a0a0"></div>
<div style="left:916px;top:369px;width:1px;height:15px;background:#fff"></div>
<div style="left:979px;top:369px;width:1px;height:15px;background:#a0a0a0"></div>
<div style="left:980px;top:369px;width:1px;height:15px;background:#fff"></div>
<div style="left:1043px;top:369px;width:1px;height:15px;background:#a0a0a0"></div>
<div style="left:1044px;top:369px;width:1px;height:15px;background:#fff"></div>
<div style="left:1107px;top:369px;width:1px;height:15px;background:#a0a0a0"></div>
<div style="left:1108px;top:369px;width:1px;height:15px;background:#fff"></div>
<div style="left:1171px;top:369px;width:1px;height:15px;background:#a0a0a0"></div>
<div style="left:1172px;top:369px;width:1px;height:15px;background:#fff"></div>
<div style="left:1235px;top:369px;width:1px;height:15px;background:#a0a0a0"></div>
<div style="left:1236px;top:369px;width:1px;height:15px;background:#fff"></div>
<div style="left:1299px;top:369px;width:1px;height:15px;background:#a0a0a0"></div>
<div style="left:1300px;top:369px;width:1px;height:15px;background:#fff"></div>
<span style="left:1053.90px;top:350.24px;transform:scaleX(0.9219);transform-origin:0 0;font-size:12px;line-height:16px;color:#000;">Температурные зоны</span>
<span style="left:439.90px;top:368.14px;transform:scaleX(0.8934);transform-origin:0 0;font-size:12px;line-height:16px;color:#000;">№ п.п.</span>
<span style="left:576.40px;top:368.14px;transform:scaleX(0.9201);transform-origin:0 0;font-size:12px;line-height:16px;color:#000;">Наименование видов строительства</span>
<span style="left:853.00px;width:63.00px;text-align:center;top:368.14px;transform:scaleX(0.925);transform-origin:50% 0;font-size:12px;line-height:16px;color:#000;">I</span>
<span style="left:917.00px;width:63.00px;text-align:center;top:368.14px;transform:scaleX(0.925);transform-origin:50% 0;font-size:12px;line-height:16px;color:#000;">II</span>
<span style="left:981.00px;width:63.00px;text-align:center;top:368.14px;transform:scaleX(0.925);transform-origin:50% 0;font-size:12px;line-height:16px;color:#000;">III</span>
<span style="left:1045.00px;width:63.00px;text-align:center;top:368.14px;transform:scaleX(0.925);transform-origin:50% 0;font-size:12px;line-height:16px;color:#000;">IV</span>
<span style="left:1109.00px;width:63.00px;text-align:center;top:368.14px;transform:scaleX(0.925);transform-origin:50% 0;font-size:12px;line-height:16px;color:#000;">V</span>
<span style="left:1173.00px;width:63.00px;text-align:center;top:368.14px;transform:scaleX(0.925);transform-origin:50% 0;font-size:12px;line-height:16px;color:#000;">VI</span>
<span style="left:1237.00px;width:63.00px;text-align:center;top:368.14px;transform:scaleX(0.925);transform-origin:50% 0;font-size:12px;line-height:16px;color:#000;">VII</span>
<span style="left:1301.00px;width:63.00px;text-align:center;top:368.14px;transform:scaleX(0.925);transform-origin:50% 0;font-size:12px;line-height:16px;color:#000;">VIII</span>
<div style="left:424px;top:385px;width:63px;height:16px;background:#0078d7;border:1px dotted #f0a060"></div>
<span style="left:490.50px;top:384.84px;transform:scaleX(0.9142);transform-origin:0 0;font-size:12px;line-height:16px;color:#000;">Промышленное строительство</span>
<div style="left:376px;top:401px;width:988px;height:1px;background:#a0a0a0"></div>
<div style="left:423px;top:385px;width:1px;height:16px;background:#a0a0a0"></div>
<div style="left:487px;top:385px;width:1px;height:16px;background:#a0a0a0"></div>
<div style="left:851px;top:385px;width:1px;height:16px;background:#a0a0a0"></div>
<div style="left:915px;top:385px;width:1px;height:16px;background:#a0a0a0"></div>
<div style="left:979px;top:385px;width:1px;height:16px;background:#a0a0a0"></div>
<div style="left:1043px;top:385px;width:1px;height:16px;background:#a0a0a0"></div>
<div style="left:1107px;top:385px;width:1px;height:16px;background:#a0a0a0"></div>
<div style="left:1171px;top:385px;width:1px;height:16px;background:#a0a0a0"></div>
<div style="left:1235px;top:385px;width:1px;height:16px;background:#a0a0a0"></div>
<div style="left:1299px;top:385px;width:1px;height:16px;background:#a0a0a0"></div>
<div style="left:1363px;top:385px;width:1px;height:16px;background:#a0a0a0"></div>
<div style="left:392px;top:402px;width:972px;height:16px;background:#fff"></div>
<span style="left:425.00px;width:63.00px;text-align:center;top:401.84px;transform:scaleX(0.925);transform-origin:50% 0;font-size:12px;line-height:16px;color:#000;">1</span>
<span style="left:852.00px;width:63.00px;text-align:center;top:401.84px;transform:scaleX(0.925);transform-origin:50% 0;font-size:12px;line-height:16px;color:#000;">0,8</span>
<span style="left:916.00px;width:63.00px;text-align:center;top:401.84px;transform:scaleX(0.925);transform-origin:50% 0;font-size:12px;line-height:16px;color:#000;">1,6</span>
<span style="left:980.00px;width:63.00px;text-align:center;top:401.84px;transform:scaleX(0.925);transform-origin:50% 0;font-size:12px;line-height:16px;color:#000;">3,2</span>
<span style="left:1044.00px;width:63.00px;text-align:center;top:401.84px;transform:scaleX(0.925);transform-origin:50% 0;font-size:12px;line-height:16px;color:#000;">4</span>
<span style="left:1108.00px;width:63.00px;text-align:center;top:401.84px;transform:scaleX(0.925);transform-origin:50% 0;font-size:12px;line-height:16px;color:#000;">5,5</span>
<span style="left:1172.00px;width:63.00px;text-align:center;top:401.84px;transform:scaleX(0.925);transform-origin:50% 0;font-size:12px;line-height:16px;color:#000;">9,3</span>
<span style="left:1236.00px;width:63.00px;text-align:center;top:401.84px;transform:scaleX(0.925);transform-origin:50% 0;font-size:12px;line-height:16px;color:#000;">11,2</span>
<span style="left:1300.00px;width:63.00px;text-align:center;top:401.84px;transform:scaleX(0.925);transform-origin:50% 0;font-size:12px;line-height:16px;color:#000;">12,8</span>
<span style="left:490.50px;top:401.84px;transform:scaleX(0.9142);transform-origin:0 0;font-size:12px;line-height:16px;color:#000;">Предприятия нефтяной и газовой промышленности</span>
<div style="left:391px;top:418px;width:973px;height:1px;background:#a0a0a0"></div>
<div style="left:423px;top:402px;width:1px;height:16px;background:#a0a0a0"></div>
<div style="left:487px;top:402px;width:1px;height:16px;background:#a0a0a0"></div>
<div style="left:851px;top:402px;width:1px;height:16px;background:#a0a0a0"></div>
<div style="left:915px;top:402px;width:1px;height:16px;background:#a0a0a0"></div>
<div style="left:979px;top:402px;width:1px;height:16px;background:#a0a0a0"></div>
<div style="left:1043px;top:402px;width:1px;height:16px;background:#a0a0a0"></div>
<div style="left:1107px;top:402px;width:1px;height:16px;background:#a0a0a0"></div>
<div style="left:1171px;top:402px;width:1px;height:16px;background:#a0a0a0"></div>
<div style="left:1235px;top:402px;width:1px;height:16px;background:#a0a0a0"></div>
<div style="left:1299px;top:402px;width:1px;height:16px;background:#a0a0a0"></div>
<div style="left:1363px;top:402px;width:1px;height:16px;background:#a0a0a0"></div>
<div style="left:391px;top:402px;width:1px;height:16px;background:#a0a0a0"></div>
<div style="left:392px;top:419px;width:972px;height:29px;background:#fff"></div>
<span style="left:425.00px;width:63.00px;text-align:center;top:418.84px;transform:scaleX(0.925);transform-origin:50% 0;font-size:12px;line-height:16px;color:#000;">2</span>
<span style="left:852.00px;width:63.00px;text-align:center;top:418.84px;transform:scaleX(0.925);transform-origin:50% 0;font-size:12px;line-height:16px;color:#000;">0,6</span>
<span style="left:916.00px;width:63.00px;text-align:center;top:418.84px;transform:scaleX(0.925);transform-origin:50% 0;font-size:12px;line-height:16px;color:#000;">1,4</span>
<span style="left:980.00px;width:63.00px;text-align:center;top:418.84px;transform:scaleX(0.925);transform-origin:50% 0;font-size:12px;line-height:16px;color:#000;">2,8</span>
<span style="left:1044.00px;width:63.00px;text-align:center;top:418.84px;transform:scaleX(0.925);transform-origin:50% 0;font-size:12px;line-height:16px;color:#000;">4</span>
<span style="left:1108.00px;width:63.00px;text-align:center;top:418.84px;transform:scaleX(0.925);transform-origin:50% 0;font-size:12px;line-height:16px;color:#000;">5,4</span>
<span style="left:1172.00px;width:63.00px;text-align:center;top:418.84px;transform:scaleX(0.925);transform-origin:50% 0;font-size:12px;line-height:16px;color:#000;">9,6</span>
<span style="left:1236.00px;width:63.00px;text-align:center;top:418.84px;transform:scaleX(0.925);transform-origin:50% 0;font-size:12px;line-height:16px;color:#000;">9,7</span>
<span style="left:1300.00px;width:63.00px;text-align:center;top:418.84px;transform:scaleX(0.925);transform-origin:50% 0;font-size:12px;line-height:16px;color:#000;">11,4</span>
<span style="left:490.50px;top:418.84px;transform:scaleX(0.9070);transform-origin:0 0;font-size:12px;line-height:16px;color:#000;">Предприятия нефтеперерабатывающей и нефтехимической</span>
<span style="left:490.50px;top:431.84px;transform:scaleX(0.9077);transform-origin:0 0;font-size:12px;line-height:16px;color:#000;">промышленности</span>
<div style="left:391px;top:448px;width:973px;height:1px;background:#a0a0a0"></div>
<div style="left:423px;top:419px;width:1px;height:29px;background:#a0a0a0"></div>
<div style="left:487px;top:419px;width:1px;height:29px;background:#a0a0a0"></div>
<div style="left:851px;top:419px;width:1px;height:29px;background:#a0a0a0"></div>
<div style="left:915px;top:419px;width:1px;height:29px;background:#a0a0a0"></div>
<div style="left:979px;top:419px;width:1px;height:29px;background:#a0a0a0"></div>
<div style="left:1043px;top:419px;width:1px;height:29px;background:#a0a0a0"></div>
<div style="left:1107px;top:419px;width:1px;height:29px;background:#a0a0a0"></div>
<div style="left:1171px;top:419px;width:1px;height:29px;background:#a0a0a0"></div>
<div style="left:1235px;top:419px;width:1px;height:29px;background:#a0a0a0"></div>
<div style="left:1299px;top:419px;width:1px;height:29px;background:#a0a0a0"></div>
<div style="left:1363px;top:419px;width:1px;height:29px;background:#a0a0a0"></div>
<div style="left:391px;top:419px;width:1px;height:29px;background:#a0a0a0"></div>
<div style="left:392px;top:449px;width:972px;height:29px;background:#fff"></div>
<span style="left:425.00px;width:63.00px;text-align:center;top:448.84px;transform:scaleX(0.925);transform-origin:50% 0;font-size:12px;line-height:16px;color:#000;">3</span>
<span style="left:852.00px;width:63.00px;text-align:center;top:448.84px;transform:scaleX(0.925);transform-origin:50% 0;font-size:12px;line-height:16px;color:#000;">0,7</span>
<span style="left:916.00px;width:63.00px;text-align:center;top:448.84px;transform:scaleX(0.925);transform-origin:50% 0;font-size:12px;line-height:16px;color:#000;">1,6</span>
<span style="left:980.00px;width:63.00px;text-align:center;top:448.84px;transform:scaleX(0.925);transform-origin:50% 0;font-size:12px;line-height:16px;color:#000;">3,5</span>
<span style="left:1044.00px;width:63.00px;text-align:center;top:448.84px;transform:scaleX(0.925);transform-origin:50% 0;font-size:12px;line-height:16px;color:#000;">4,8</span>
<span style="left:1108.00px;width:63.00px;text-align:center;top:448.84px;transform:scaleX(0.925);transform-origin:50% 0;font-size:12px;line-height:16px;color:#000;">6,3</span>
<span style="left:1172.00px;width:63.00px;text-align:center;top:448.84px;transform:scaleX(0.925);transform-origin:50% 0;font-size:12px;line-height:16px;color:#000;">11,4</span>
<span style="left:1236.00px;width:63.00px;text-align:center;top:448.84px;transform:scaleX(0.925);transform-origin:50% 0;font-size:12px;line-height:16px;color:#000;">11,6</span>
<span style="left:1300.00px;width:63.00px;text-align:center;top:448.84px;transform:scaleX(0.925);transform-origin:50% 0;font-size:12px;line-height:16px;color:#000;">13,6</span>
<span style="left:490.50px;top:448.84px;transform:scaleX(0.9156);transform-origin:0 0;font-size:12px;line-height:16px;color:#000;">Предприятия угольной промышленности (кроме горнопроходческих</span>
<span style="left:490.50px;top:461.84px;transform:scaleX(0.8969);transform-origin:0 0;font-size:12px;line-height:16px;color:#000;">работ)</span>
<div style="left:391px;top:478px;width:973px;height:1px;background:#a0a0a0"></div>
<div style="left:423px;top:449px;width:1px;height:29px;background:#a0a0a0"></div>
<div style="left:487px;top:449px;width:1px;height:29px;background:#a0a0a0"></div>
<div style="left:851px;top:449px;width:1px;height:29px;background:#a0a0a0"></div>
<div style="left:915px;top:449px;width:1px;height:29px;background:#a0a0a0"></div>
<div style="left:979px;top:449px;width:1px;height:29px;background:#a0a0a0"></div>
<div style="left:1043px;top:449px;width:1px;height:29px;background:#a0a0a0"></div>
<div style="left:1107px;top:449px;width:1px;height:29px;background:#a0a0a0"></div>
<div style="left:1171px;top:449px;width:1px;height:29px;background:#a0a0a0"></div>
<div style="left:1235px;top:449px;width:1px;height:29px;background:#a0a0a0"></div>
<div style="left:1299px;top:449px;width:1px;height:29px;background:#a0a0a0"></div>
<div style="left:1363px;top:449px;width:1px;height:29px;background:#a0a0a0"></div>
<div style="left:391px;top:449px;width:1px;height:29px;background:#a0a0a0"></div>
<div style="left:392px;top:479px;width:972px;height:16px;background:#fff"></div>
<span style="left:425.00px;width:63.00px;text-align:center;top:478.84px;transform:scaleX(0.925);transform-origin:50% 0;font-size:12px;line-height:16px;color:#000;">4</span>
<span style="left:852.00px;width:63.00px;text-align:center;top:478.84px;transform:scaleX(0.925);transform-origin:50% 0;font-size:12px;line-height:16px;color:#000;">0,8</span>
<span style="left:916.00px;width:63.00px;text-align:center;top:478.84px;transform:scaleX(0.925);transform-origin:50% 0;font-size:12px;line-height:16px;color:#000;">1,7</span>
<span style="left:980.00px;width:63.00px;text-align:center;top:478.84px;transform:scaleX(0.925);transform-origin:50% 0;font-size:12px;line-height:16px;color:#000;">3,7</span>
<span style="left:1044.00px;width:63.00px;text-align:center;top:478.84px;transform:scaleX(0.925);transform-origin:50% 0;font-size:12px;line-height:16px;color:#000;">5,1</span>
<span style="left:1108.00px;width:63.00px;text-align:center;top:478.84px;transform:scaleX(0.925);transform-origin:50% 0;font-size:12px;line-height:16px;color:#000;">6,8</span>
<span style="left:1172.00px;width:63.00px;text-align:center;top:478.84px;transform:scaleX(0.925);transform-origin:50% 0;font-size:12px;line-height:16px;color:#000;">7,1</span>
<span style="left:1236.00px;width:63.00px;text-align:center;top:478.84px;transform:scaleX(0.925);transform-origin:50% 0;font-size:12px;line-height:16px;color:#000;">9,5</span>
<span style="left:1300.00px;width:63.00px;text-align:center;top:478.84px;transform:scaleX(0.925);transform-origin:50% 0;font-size:12px;line-height:16px;color:#000;">9,9</span>
<span style="left:490.50px;top:478.84px;transform:scaleX(0.9038);transform-origin:0 0;font-size:12px;line-height:16px;color:#000;">Предприятия торфяной промышленности</span>
<div style="left:391px;top:495px;width:973px;height:1px;background:#a0a0a0"></div>
<div style="left:423px;top:479px;width:1px;height:16px;background:#a0a0a0"></div>
<div style="left:487px;top:479px;width:1px;height:16px;background:#a0a0a0"></div>
<div style="left:851px;top:479px;width:1px;height:16px;background:#a0a0a0"></div>
<div style="left:915px;top:479px;width:1px;height:16px;background:#a0a0a0"></div>
<div style="left:979px;top:479px;width:1px;height:16px;background:#a0a0a0"></div>
<div style="left:1043px;top:479px;width:1px;height:16px;background:#a0a0a0"></div>
<div style="left:1107px;top:479px;width:1px;height:16px;background:#a0a0a0"></div>
<div style="left:1171px;top:479px;width:1px;height:16px;background:#a0a0a0"></div>
<div style="left:1235px;top:479px;width:1px;height:16px;background:#a0a0a0"></div>
<div style="left:1299px;top:479px;width:1px;height:16px;background:#a0a0a0"></div>
<div style="left:1363px;top:479px;width:1px;height:16px;background:#a0a0a0"></div>
<div style="left:391px;top:479px;width:1px;height:16px;background:#a0a0a0"></div>
<div style="left:392px;top:496px;width:972px;height:29px;background:#fff"></div>
<span style="left:425.00px;width:63.00px;text-align:center;top:495.84px;transform:scaleX(0.925);transform-origin:50% 0;font-size:12px;line-height:16px;color:#000;">5</span>
<span style="left:852.00px;width:63.00px;text-align:center;top:495.84px;transform:scaleX(0.925);transform-origin:50% 0;font-size:12px;line-height:16px;color:#000;">0,7</span>
<span style="left:916.00px;width:63.00px;text-align:center;top:495.84px;transform:scaleX(0.925);transform-origin:50% 0;font-size:12px;line-height:16px;color:#000;">1</span>
<span style="left:980.00px;width:63.00px;text-align:center;top:495.84px;transform:scaleX(0.925);transform-origin:50% 0;font-size:12px;line-height:16px;color:#000;">1,8</span>
<span style="left:1044.00px;width:63.00px;text-align:center;top:495.84px;transform:scaleX(0.925);transform-origin:50% 0;font-size:12px;line-height:16px;color:#000;">2,3</span>
<span style="left:1108.00px;width:63.00px;text-align:center;top:495.84px;transform:scaleX(0.925);transform-origin:50% 0;font-size:12px;line-height:16px;color:#000;">2,7</span>
<span style="left:1172.00px;width:63.00px;text-align:center;top:495.84px;transform:scaleX(0.925);transform-origin:50% 0;font-size:12px;line-height:16px;color:#000;">3,8</span>
<span style="left:1236.00px;width:63.00px;text-align:center;top:495.84px;transform:scaleX(0.925);transform-origin:50% 0;font-size:12px;line-height:16px;color:#000;">4,6</span>
<span style="left:1300.00px;width:63.00px;text-align:center;top:495.84px;transform:scaleX(0.925);transform-origin:50% 0;font-size:12px;line-height:16px;color:#000;">6,8</span>
<span style="left:490.50px;top:495.84px;transform:scaleX(0.9123);transform-origin:0 0;font-size:12px;line-height:16px;color:#000;">Предприятия чёрной металлургии (кроме горнопроходческих работ и</span>
<span style="left:490.50px;top:508.84px;transform:scaleX(0.9110);transform-origin:0 0;font-size:12px;line-height:16px;color:#000;">объектов шахтной поверхности)</span>
<div style="left:391px;top:525px;width:973px;height:1px;background:#a0a0a0"></div>
<div style="left:423px;top:496px;width:1px;height:29px;background:#a0a0a0"></div>
<div style="left:487px;top:496px;width:1px;height:29px;background:#a0a0a0"></div>
<div style="left:851px;top:496px;width:1px;height:29px;background:#a0a0a0"></div>
<div style="left:915px;top:496px;width:1px;height:29px;background:#a0a0a0"></div>
<div style="left:979px;top:496px;width:1px;height:29px;background:#a0a0a0"></div>
<div style="left:1043px;top:496px;width:1px;height:29px;background:#a0a0a0"></div>
<div style="left:1107px;top:496px;width:1px;height:29px;background:#a0a0a0"></div>
<div style="left:1171px;top:496px;width:1px;height:29px;background:#a0a0a0"></div>
<div style="left:1235px;top:496px;width:1px;height:29px;background:#a0a0a0"></div>
<div style="left:1299px;top:496px;width:1px;height:29px;background:#a0a0a0"></div>
<div style="left:1363px;top:496px;width:1px;height:29px;background:#a0a0a0"></div>
<div style="left:391px;top:496px;width:1px;height:29px;background:#a0a0a0"></div>
<div style="left:392px;top:526px;width:972px;height:29px;background:#fff"></div>
<span style="left:425.00px;width:63.00px;text-align:center;top:525.84px;transform:scaleX(0.925);transform-origin:50% 0;font-size:12px;line-height:16px;color:#000;">6</span>
<span style="left:852.00px;width:63.00px;text-align:center;top:525.84px;transform:scaleX(0.925);transform-origin:50% 0;font-size:12px;line-height:16px;color:#000;">0,6</span>
<span style="left:916.00px;width:63.00px;text-align:center;top:525.84px;transform:scaleX(0.925);transform-origin:50% 0;font-size:12px;line-height:16px;color:#000;">1,2</span>
<span style="left:980.00px;width:63.00px;text-align:center;top:525.84px;transform:scaleX(0.925);transform-origin:50% 0;font-size:12px;line-height:16px;color:#000;">2,1</span>
<span style="left:1044.00px;width:63.00px;text-align:center;top:525.84px;transform:scaleX(0.925);transform-origin:50% 0;font-size:12px;line-height:16px;color:#000;">3</span>
<span style="left:1108.00px;width:63.00px;text-align:center;top:525.84px;transform:scaleX(0.925);transform-origin:50% 0;font-size:12px;line-height:16px;color:#000;">4</span>
<span style="left:1172.00px;width:63.00px;text-align:center;top:525.84px;transform:scaleX(0.925);transform-origin:50% 0;font-size:12px;line-height:16px;color:#000;">6,1</span>
<span style="left:1236.00px;width:63.00px;text-align:center;top:525.84px;transform:scaleX(0.925);transform-origin:50% 0;font-size:12px;line-height:16px;color:#000;">6,3</span>
<span style="left:1300.00px;width:63.00px;text-align:center;top:525.84px;transform:scaleX(0.925);transform-origin:50% 0;font-size:12px;line-height:16px;color:#000;">7,4</span>
<span style="left:490.50px;top:525.84px;transform:scaleX(0.9156);transform-origin:0 0;font-size:12px;line-height:16px;color:#000;">Предприятия цветной металлургии (кроме горнопроходческих работ и</span>
<span style="left:490.50px;top:538.84px;transform:scaleX(0.9110);transform-origin:0 0;font-size:12px;line-height:16px;color:#000;">объектов шахтной поверхности)</span>
<div style="left:391px;top:555px;width:973px;height:1px;background:#a0a0a0"></div>
<div style="left:423px;top:526px;width:1px;height:29px;background:#a0a0a0"></div>
<div style="left:487px;top:526px;width:1px;height:29px;background:#a0a0a0"></div>
<div style="left:851px;top:526px;width:1px;height:29px;background:#a0a0a0"></div>
<div style="left:915px;top:526px;width:1px;height:29px;background:#a0a0a0"></div>
<div style="left:979px;top:526px;width:1px;height:29px;background:#a0a0a0"></div>
<div style="left:1043px;top:526px;width:1px;height:29px;background:#a0a0a0"></div>
<div style="left:1107px;top:526px;width:1px;height:29px;background:#a0a0a0"></div>
<div style="left:1171px;top:526px;width:1px;height:29px;background:#a0a0a0"></div>
<div style="left:1235px;top:526px;width:1px;height:29px;background:#a0a0a0"></div>
<div style="left:1299px;top:526px;width:1px;height:29px;background:#a0a0a0"></div>
<div style="left:1363px;top:526px;width:1px;height:29px;background:#a0a0a0"></div>
<div style="left:391px;top:526px;width:1px;height:29px;background:#a0a0a0"></div>
<div style="left:392px;top:556px;width:972px;height:16px;background:#fff"></div>
<span style="left:425.00px;width:63.00px;text-align:center;top:555.84px;transform:scaleX(0.925);transform-origin:50% 0;font-size:12px;line-height:16px;color:#000;">7</span>
<span style="left:852.00px;width:63.00px;text-align:center;top:555.84px;transform:scaleX(0.925);transform-origin:50% 0;font-size:12px;line-height:16px;color:#000;">0,6</span>
<span style="left:916.00px;width:63.00px;text-align:center;top:555.84px;transform:scaleX(0.925);transform-origin:50% 0;font-size:12px;line-height:16px;color:#000;">1,2</span>
<span style="left:980.00px;width:63.00px;text-align:center;top:555.84px;transform:scaleX(0.925);transform-origin:50% 0;font-size:12px;line-height:16px;color:#000;">2,3</span>
<span style="left:1044.00px;width:63.00px;text-align:center;top:555.84px;transform:scaleX(0.925);transform-origin:50% 0;font-size:12px;line-height:16px;color:#000;">3,5</span>
<span style="left:1108.00px;width:63.00px;text-align:center;top:555.84px;transform:scaleX(0.925);transform-origin:50% 0;font-size:12px;line-height:16px;color:#000;">4,6</span>
<span style="left:1172.00px;width:63.00px;text-align:center;top:555.84px;transform:scaleX(0.925);transform-origin:50% 0;font-size:12px;line-height:16px;color:#000;">7,5</span>
<span style="left:1236.00px;width:63.00px;text-align:center;top:555.84px;transform:scaleX(0.925);transform-origin:50% 0;font-size:12px;line-height:16px;color:#000;">7,8</span>
<span style="left:1300.00px;width:63.00px;text-align:center;top:555.84px;transform:scaleX(0.925);transform-origin:50% 0;font-size:12px;line-height:16px;color:#000;">9,3</span>
<span style="left:490.50px;top:555.84px;transform:scaleX(0.9117);transform-origin:0 0;font-size:12px;line-height:16px;color:#000;">Предприятия химической промышленности</span>
<div style="left:391px;top:572px;width:973px;height:1px;background:#a0a0a0"></div>
<div style="left:423px;top:556px;width:1px;height:16px;background:#a0a0a0"></div>
<div style="left:487px;top:556px;width:1px;height:16px;background:#a0a0a0"></div>
<div style="left:851px;top:556px;width:1px;height:16px;background:#a0a0a0"></div>
<div style="left:915px;top:556px;width:1px;height:16px;background:#a0a0a0"></div>
<div style="left:979px;top:556px;width:1px;height:16px;background:#a0a0a0"></div>
<div style="left:1043px;top:556px;width:1px;height:16px;background:#a0a0a0"></div>
<div style="left:1107px;top:556px;width:1px;height:16px;background:#a0a0a0"></div>
<div style="left:1171px;top:556px;width:1px;height:16px;background:#a0a0a0"></div>
<div style="left:1235px;top:556px;width:1px;height:16px;background:#a0a0a0"></div>
<div style="left:1299px;top:556px;width:1px;height:16px;background:#a0a0a0"></div>
<div style="left:1363px;top:556px;width:1px;height:16px;background:#a0a0a0"></div>
<div style="left:391px;top:556px;width:1px;height:16px;background:#a0a0a0"></div>
<div style="left:392px;top:573px;width:972px;height:29px;background:#fff"></div>
<span style="left:425.00px;width:63.00px;text-align:center;top:572.84px;transform:scaleX(0.925);transform-origin:50% 0;font-size:12px;line-height:16px;color:#000;">8</span>
<span style="left:852.00px;width:63.00px;text-align:center;top:572.84px;transform:scaleX(0.925);transform-origin:50% 0;font-size:12px;line-height:16px;color:#000;">0,7</span>
<span style="left:916.00px;width:63.00px;text-align:center;top:572.84px;transform:scaleX(0.925);transform-origin:50% 0;font-size:12px;line-height:16px;color:#000;">1,3</span>
<span style="left:980.00px;width:63.00px;text-align:center;top:572.84px;transform:scaleX(0.925);transform-origin:50% 0;font-size:12px;line-height:16px;color:#000;">2,4</span>
<span style="left:1044.00px;width:63.00px;text-align:center;top:572.84px;transform:scaleX(0.925);transform-origin:50% 0;font-size:12px;line-height:16px;color:#000;">3,3</span>
<span style="left:1108.00px;width:63.00px;text-align:center;top:572.84px;transform:scaleX(0.925);transform-origin:50% 0;font-size:12px;line-height:16px;color:#000;">4,5</span>
<span style="left:1172.00px;width:63.00px;text-align:center;top:572.84px;transform:scaleX(0.925);transform-origin:50% 0;font-size:12px;line-height:16px;color:#000;">7,4</span>
<span style="left:1236.00px;width:63.00px;text-align:center;top:572.84px;transform:scaleX(0.925);transform-origin:50% 0;font-size:12px;line-height:16px;color:#000;">8,4</span>
<span style="left:1300.00px;width:63.00px;text-align:center;top:572.84px;transform:scaleX(0.925);transform-origin:50% 0;font-size:12px;line-height:16px;color:#000;">9,9</span>
<span style="left:490.50px;top:572.84px;transform:scaleX(0.9291);transform-origin:0 0;font-size:12px;line-height:16px;color:#000;">Предприятия тяжёлого, энергетического и транспортного</span>
<span style="left:490.50px;top:585.84px;transform:scaleX(0.9134);transform-origin:0 0;font-size:12px;line-height:16px;color:#000;">машиностроения</span>
<div style="left:391px;top:602px;width:973px;height:1px;background:#a0a0a0"></div>
<div style="left:423px;top:573px;width:1px;height:29px;background:#a0a0a0"></div>
<div style="left:487px;top:573px;width:1px;height:29px;background:#a0a0a0"></div>
<div style="left:851px;top:573px;width:1px;height:29px;background:#a0a0a0"></div>
<div style="left:915px;top:573px;width:1px;height:29px;background:#a0a0a0"></div>
<div style="left:979px;top:573px;width:1px;height:29px;background:#a0a0a0"></div>
<div style="left:1043px;top:573px;width:1px;height:29px;background:#a0a0a0"></div>
<div style="left:1107px;top:573px;width:1px;height:29px;background:#a0a0a0"></div>
<div style="left:1171px;top:573px;width:1px;height:29px;background:#a0a0a0"></div>
<div style="left:1235px;top:573px;width:1px;height:29px;background:#a0a0a0"></div>
<div style="left:1299px;top:573px;width:1px;height:29px;background:#a0a0a0"></div>
<div style="left:1363px;top:573px;width:1px;height:29px;background:#a0a0a0"></div>
<div style="left:391px;top:573px;width:1px;height:29px;background:#a0a0a0"></div>
<div style="left:392px;top:603px;width:972px;height:16px;background:#fff"></div>
<span style="left:425.00px;width:63.00px;text-align:center;top:602.84px;transform:scaleX(0.925);transform-origin:50% 0;font-size:12px;line-height:16px;color:#000;">9</span>
<span style="left:852.00px;width:63.00px;text-align:center;top:602.84px;transform:scaleX(0.925);transform-origin:50% 0;font-size:12px;line-height:16px;color:#000;">0,4</span>
<span style="left:916.00px;width:63.00px;text-align:center;top:602.84px;transform:scaleX(0.925);transform-origin:50% 0;font-size:12px;line-height:16px;color:#000;">1,1</span>
<span style="left:980.00px;width:63.00px;text-align:center;top:602.84px;transform:scaleX(0.925);transform-origin:50% 0;font-size:12px;line-height:16px;color:#000;">1,6</span>
<span style="left:1044.00px;width:63.00px;text-align:center;top:602.84px;transform:scaleX(0.925);transform-origin:50% 0;font-size:12px;line-height:16px;color:#000;">2,4</span>
<span style="left:1108.00px;width:63.00px;text-align:center;top:602.84px;transform:scaleX(0.925);transform-origin:50% 0;font-size:12px;line-height:16px;color:#000;">3,4</span>
<span style="left:1172.00px;width:63.00px;text-align:center;top:602.84px;transform:scaleX(0.925);transform-origin:50% 0;font-size:12px;line-height:16px;color:#000;">5,5</span>
<span style="left:1236.00px;width:63.00px;text-align:center;top:602.84px;transform:scaleX(0.925);transform-origin:50% 0;font-size:12px;line-height:16px;color:#000;">5,7</span>
<span style="left:1300.00px;width:63.00px;text-align:center;top:602.84px;transform:scaleX(0.925);transform-origin:50% 0;font-size:12px;line-height:16px;color:#000;">6,8</span>
<span style="left:490.50px;top:602.84px;transform:scaleX(0.9269);transform-origin:0 0;font-size:12px;line-height:16px;color:#000;">Предприятия сельскохозяйственного и тракторного машиностроения</span>
<div style="left:391px;top:619px;width:973px;height:1px;background:#a0a0a0"></div>
<div style="left:423px;top:603px;width:1px;height:16px;background:#a0a0a0"></div>
<div style="left:487px;top:603px;width:1px;height:16px;background:#a0a0a0"></div>
<div style="left:851px;top:603px;width:1px;height:16px;background:#a0a0a0"></div>
<div style="left:915px;top:603px;width:1px;height:16px;background:#a0a0a0"></div>
<div style="left:979px;top:603px;width:1px;height:16px;background:#a0a0a0"></div>
<div style="left:1043px;top:603px;width:1px;height:16px;background:#a0a0a0"></div>
<div style="left:1107px;top:603px;width:1px;height:16px;background:#a0a0a0"></div>
<div style="left:1171px;top:603px;width:1px;height:16px;background:#a0a0a0"></div>
<div style="left:1235px;top:603px;width:1px;height:16px;background:#a0a0a0"></div>
<div style="left:1299px;top:603px;width:1px;height:16px;background:#a0a0a0"></div>
<div style="left:1363px;top:603px;width:1px;height:16px;background:#a0a0a0"></div>
<div style="left:391px;top:603px;width:1px;height:16px;background:#a0a0a0"></div>
<div style="left:392px;top:620px;width:972px;height:16px;background:#fff"></div>
<span style="left:425.00px;width:63.00px;text-align:center;top:619.84px;transform:scaleX(0.925);transform-origin:50% 0;font-size:12px;line-height:16px;color:#000;">10</span>
<span style="left:852.00px;width:63.00px;text-align:center;top:619.84px;transform:scaleX(0.925);transform-origin:50% 0;font-size:12px;line-height:16px;color:#000;">0,6</span>
<span style="left:916.00px;width:63.00px;text-align:center;top:619.84px;transform:scaleX(0.925);transform-origin:50% 0;font-size:12px;line-height:16px;color:#000;">1,3</span>
<span style="left:980.00px;width:63.00px;text-align:center;top:619.84px;transform:scaleX(0.925);transform-origin:50% 0;font-size:12px;line-height:16px;color:#000;">2,1</span>
<span style="left:1044.00px;width:63.00px;text-align:center;top:619.84px;transform:scaleX(0.925);transform-origin:50% 0;font-size:12px;line-height:16px;color:#000;">3,1</span>
<span style="left:1108.00px;width:63.00px;text-align:center;top:619.84px;transform:scaleX(0.925);transform-origin:50% 0;font-size:12px;line-height:16px;color:#000;">4,3</span>
<span style="left:1172.00px;width:63.00px;text-align:center;top:619.84px;transform:scaleX(0.925);transform-origin:50% 0;font-size:12px;line-height:16px;color:#000;">7,5</span>
<span style="left:1236.00px;width:63.00px;text-align:center;top:619.84px;transform:scaleX(0.925);transform-origin:50% 0;font-size:12px;line-height:16px;color:#000;">7,6</span>
<span style="left:1300.00px;width:63.00px;text-align:center;top:619.84px;transform:scaleX(0.925);transform-origin:50% 0;font-size:12px;line-height:16px;color:#000;">8,9</span>
<span style="left:490.50px;top:619.84px;transform:scaleX(0.9207);transform-origin:0 0;font-size:12px;line-height:16px;color:#000;">Предприятия легкого и прочего машиностроения</span>
<div style="left:391px;top:636px;width:973px;height:1px;background:#a0a0a0"></div>
<div style="left:423px;top:620px;width:1px;height:16px;background:#a0a0a0"></div>
<div style="left:487px;top:620px;width:1px;height:16px;background:#a0a0a0"></div>
<div style="left:851px;top:620px;width:1px;height:16px;background:#a0a0a0"></div>
<div style="left:915px;top:620px;width:1px;height:16px;background:#a0a0a0"></div>
<div style="left:979px;top:620px;width:1px;height:16px;background:#a0a0a0"></div>
<div style="left:1043px;top:620px;width:1px;height:16px;background:#a0a0a0"></div>
<div style="left:1107px;top:620px;width:1px;height:16px;background:#a0a0a0"></div>
<div style="left:1171px;top:620px;width:1px;height:16px;background:#a0a0a0"></div>
<div style="left:1235px;top:620px;width:1px;height:16px;background:#a0a0a0"></div>
<div style="left:1299px;top:620px;width:1px;height:16px;background:#a0a0a0"></div>
<div style="left:1363px;top:620px;width:1px;height:16px;background:#a0a0a0"></div>
<div style="left:391px;top:620px;width:1px;height:16px;background:#a0a0a0"></div>
<div style="left:392px;top:637px;width:972px;height:16px;background:#fff"></div>
<span style="left:425.00px;width:63.00px;text-align:center;top:636.84px;transform:scaleX(0.925);transform-origin:50% 0;font-size:12px;line-height:16px;color:#000;">11</span>
<span style="left:852.00px;width:63.00px;text-align:center;top:636.84px;transform:scaleX(0.925);transform-origin:50% 0;font-size:12px;line-height:16px;color:#000;">0,9</span>
<span style="left:916.00px;width:63.00px;text-align:center;top:636.84px;transform:scaleX(0.925);transform-origin:50% 0;font-size:12px;line-height:16px;color:#000;">1,5</span>
<span style="left:980.00px;width:63.00px;text-align:center;top:636.84px;transform:scaleX(0.925);transform-origin:50% 0;font-size:12px;line-height:16px;color:#000;">2,6</span>
<span style="left:1044.00px;width:63.00px;text-align:center;top:636.84px;transform:scaleX(0.925);transform-origin:50% 0;font-size:12px;line-height:16px;color:#000;">3,4</span>
<span style="left:1108.00px;width:63.00px;text-align:center;top:636.84px;transform:scaleX(0.925);transform-origin:50% 0;font-size:12px;line-height:16px;color:#000;">4,2</span>
<span style="left:1172.00px;width:63.00px;text-align:center;top:636.84px;transform:scaleX(0.925);transform-origin:50% 0;font-size:12px;line-height:16px;color:#000;">6,5</span>
<span style="left:1236.00px;width:63.00px;text-align:center;top:636.84px;transform:scaleX(0.925);transform-origin:50% 0;font-size:12px;line-height:16px;color:#000;">7</span>
<span style="left:1300.00px;width:63.00px;text-align:center;top:636.84px;transform:scaleX(0.925);transform-origin:50% 0;font-size:12px;line-height:16px;color:#000;">7,3</span>
<span style="left:490.50px;top:636.84px;transform:scaleX(0.9155);transform-origin:0 0;font-size:12px;line-height:16px;color:#000;">Предприятия электротехнической промышленности</span>
<div style="left:391px;top:653px;width:973px;height:1px;background:#a0a0a0"></div>
<div style="left:423px;top:637px;width:1px;height:16px;background:#a0a0a0"></div>
<div style="left:487px;top:637px;width:1px;height:16px;background:#a0a0a0"></div>
<div style="left:851px;top:637px;width:1px;height:16px;background:#a0a0a0"></div>
<div style="left:915px;top:637px;width:1px;height:16px;background:#a0a0a0"></div>
<div style="left:979px;top:637px;width:1px;height:16px;background:#a0a0a0"></div>
<div style="left:1043px;top:637px;width:1px;height:16px;background:#a0a0a0"></div>
<div style="left:1107px;top:637px;width:1px;height:16px;background:#a0a0a0"></div>
<div style="left:1171px;top:637px;width:1px;height:16px;background:#a0a0a0"></div>
<div style="left:1235px;top:637px;width:1px;height:16px;background:#a0a0a0"></div>
<div style="left:1299px;top:637px;width:1px;height:16px;background:#a0a0a0"></div>
<div style="left:1363px;top:637px;width:1px;height:16px;background:#a0a0a0"></div>
<div style="left:391px;top:637px;width:1px;height:16px;background:#a0a0a0"></div>
<div style="left:392px;top:654px;width:972px;height:29px;background:#fff"></div>
<span style="left:425.00px;width:63.00px;text-align:center;top:653.84px;transform:scaleX(0.925);transform-origin:50% 0;font-size:12px;line-height:16px;color:#000;">12</span>
<span style="left:852.00px;width:63.00px;text-align:center;top:653.84px;transform:scaleX(0.925);transform-origin:50% 0;font-size:12px;line-height:16px;color:#000;">0,7</span>
<span style="left:916.00px;width:63.00px;text-align:center;top:653.84px;transform:scaleX(0.925);transform-origin:50% 0;font-size:12px;line-height:16px;color:#000;">1,4</span>
<span style="left:980.00px;width:63.00px;text-align:center;top:653.84px;transform:scaleX(0.925);transform-origin:50% 0;font-size:12px;line-height:16px;color:#000;">2,1</span>
<span style="left:1044.00px;width:63.00px;text-align:center;top:653.84px;transform:scaleX(0.925);transform-origin:50% 0;font-size:12px;line-height:16px;color:#000;">2,9</span>
<span style="left:1108.00px;width:63.00px;text-align:center;top:653.84px;transform:scaleX(0.925);transform-origin:50% 0;font-size:12px;line-height:16px;color:#000;">4</span>
<span style="left:1172.00px;width:63.00px;text-align:center;top:653.84px;transform:scaleX(0.925);transform-origin:50% 0;font-size:12px;line-height:16px;color:#000;">6,2</span>
<span style="left:1236.00px;width:63.00px;text-align:center;top:653.84px;transform:scaleX(0.925);transform-origin:50% 0;font-size:12px;line-height:16px;color:#000;">6,5</span>
<span style="left:1300.00px;width:63.00px;text-align:center;top:653.84px;transform:scaleX(0.925);transform-origin:50% 0;font-size:12px;line-height:16px;color:#000;">7,8</span>
<span style="left:490.50px;top:653.84px;transform:scaleX(0.9170);transform-origin:0 0;font-size:12px;line-height:16px;color:#000;">Предприятия станкостроительной и инструментальной</span>
<span style="left:490.50px;top:666.84px;transform:scaleX(0.9077);transform-origin:0 0;font-size:12px;line-height:16px;color:#000;">промышленности</span>
<div style="left:391px;top:683px;width:973px;height:1px;background:#a0a0a0"></div>
<div style="left:423px;top:654px;width:1px;height:29px;background:#a0a0a0"></div>
<div style="left:487px;top:654px;width:1px;height:29px;background:#a0a0a0"></div>
<div style="left:851px;top:654px;width:1px;height:29px;background:#a0a0a0"></div>
<div style="left:915px;top:654px;width:1px;height:29px;background:#a0a0a0"></div>
<div style="left:979px;top:654px;width:1px;height:29px;background:#a0a0a0"></div>
<div style="left:1043px;top:654px;width:1px;height:29px;background:#a0a0a0"></div>
<div style="left:1107px;top:654px;width:1px;height:29px;background:#a0a0a0"></div>
<div style="left:1171px;top:654px;width:1px;height:29px;background:#a0a0a0"></div>
<div style="left:1235px;top:654px;width:1px;height:29px;background:#a0a0a0"></div>
<div style="left:1299px;top:654px;width:1px;height:29px;background:#a0a0a0"></div>
<div style="left:1363px;top:654px;width:1px;height:29px;background:#a0a0a0"></div>
<div style="left:391px;top:654px;width:1px;height:29px;background:#a0a0a0"></div>
<div style="left:392px;top:684px;width:972px;height:16px;background:#fff"></div>
<span style="left:425.00px;width:63.00px;text-align:center;top:683.84px;transform:scaleX(0.925);transform-origin:50% 0;font-size:12px;line-height:16px;color:#000;">13</span>
<span style="left:852.00px;width:63.00px;text-align:center;top:683.84px;transform:scaleX(0.925);transform-origin:50% 0;font-size:12px;line-height:16px;color:#000;">0,7</span>
<span style="left:916.00px;width:63.00px;text-align:center;top:683.84px;transform:scaleX(0.925);transform-origin:50% 0;font-size:12px;line-height:16px;color:#000;">1,3</span>
<span style="left:980.00px;width:63.00px;text-align:center;top:683.84px;transform:scaleX(0.925);transform-origin:50% 0;font-size:12px;line-height:16px;color:#000;">2,3</span>
<span style="left:1044.00px;width:63.00px;text-align:center;top:683.84px;transform:scaleX(0.925);transform-origin:50% 0;font-size:12px;line-height:16px;color:#000;">2,8</span>
<span style="left:1108.00px;width:63.00px;text-align:center;top:683.84px;transform:scaleX(0.925);transform-origin:50% 0;font-size:12px;line-height:16px;color:#000;">4</span>
<span style="left:1172.00px;width:63.00px;text-align:center;top:683.84px;transform:scaleX(0.925);transform-origin:50% 0;font-size:12px;line-height:16px;color:#000;">6,2</span>
<span style="left:1236.00px;width:63.00px;text-align:center;top:683.84px;transform:scaleX(0.925);transform-origin:50% 0;font-size:12px;line-height:16px;color:#000;">6,5</span>
<span style="left:1300.00px;width:63.00px;text-align:center;top:683.84px;transform:scaleX(0.925);transform-origin:50% 0;font-size:12px;line-height:16px;color:#000;">7,8</span>
<span style="left:490.50px;top:683.84px;transform:scaleX(0.9162);transform-origin:0 0;font-size:12px;line-height:16px;color:#000;">Предприятия приборостроения и средств автоматизации</span>
<div style="left:391px;top:700px;width:973px;height:1px;background:#a0a0a0"></div>
<div style="left:423px;top:684px;width:1px;height:16px;background:#a0a0a0"></div>
<div style="left:487px;top:684px;width:1px;height:16px;background:#a0a0a0"></div>
<div style="left:851px;top:684px;width:1px;height:16px;background:#a0a0a0"></div>
<div style="left:915px;top:684px;width:1px;height:16px;background:#a0a0a0"></div>
<div style="left:979px;top:684px;width:1px;height:16px;background:#a0a0a0"></div>
<div style="left:1043px;top:684px;width:1px;height:16px;background:#a0a0a0"></div>
<div style="left:1107px;top:684px;width:1px;height:16px;background:#a0a0a0"></div>
<div style="left:1171px;top:684px;width:1px;height:16px;background:#a0a0a0"></div>
<div style="left:1235px;top:684px;width:1px;height:16px;background:#a0a0a0"></div>
<div style="left:1299px;top:684px;width:1px;height:16px;background:#a0a0a0"></div>
<div style="left:1363px;top:684px;width:1px;height:16px;background:#a0a0a0"></div>
<div style="left:391px;top:684px;width:1px;height:16px;background:#a0a0a0"></div>
<div style="left:392px;top:701px;width:972px;height:16px;background:#fff"></div>
<span style="left:425.00px;width:63.00px;text-align:center;top:700.84px;transform:scaleX(0.925);transform-origin:50% 0;font-size:12px;line-height:16px;color:#000;">14</span>
<span style="left:852.00px;width:63.00px;text-align:center;top:700.84px;transform:scaleX(0.925);transform-origin:50% 0;font-size:12px;line-height:16px;color:#000;">0,6</span>
<span style="left:916.00px;width:63.00px;text-align:center;top:700.84px;transform:scaleX(0.925);transform-origin:50% 0;font-size:12px;line-height:16px;color:#000;">1,2</span>
<span style="left:980.00px;width:63.00px;text-align:center;top:700.84px;transform:scaleX(0.925);transform-origin:50% 0;font-size:12px;line-height:16px;color:#000;">2,3</span>
<span style="left:1044.00px;width:63.00px;text-align:center;top:700.84px;transform:scaleX(0.925);transform-origin:50% 0;font-size:12px;line-height:16px;color:#000;">3,1</span>
<span style="left:1108.00px;width:63.00px;text-align:center;top:700.84px;transform:scaleX(0.925);transform-origin:50% 0;font-size:12px;line-height:16px;color:#000;">4,5</span>
<span style="left:1172.00px;width:63.00px;text-align:center;top:700.84px;transform:scaleX(0.925);transform-origin:50% 0;font-size:12px;line-height:16px;color:#000;">6,9</span>
<span style="left:1236.00px;width:63.00px;text-align:center;top:700.84px;transform:scaleX(0.925);transform-origin:50% 0;font-size:12px;line-height:16px;color:#000;">9,6</span>
<span style="left:1300.00px;width:63.00px;text-align:center;top:700.84px;transform:scaleX(0.925);transform-origin:50% 0;font-size:12px;line-height:16px;color:#000;">12,1</span>
<span style="left:490.50px;top:700.84px;transform:scaleX(0.9193);transform-origin:0 0;font-size:12px;line-height:16px;color:#000;">Предприятия промышленности средств связи, радио и электроники</span>
<div style="left:391px;top:717px;width:973px;height:1px;background:#a0a0a0"></div>
<div style="left:423px;top:701px;width:1px;height:16px;background:#a0a0a0"></div>
<div style="left:487px;top:701px;width:1px;height:16px;background:#a0a0a0"></div>
<div style="left:851px;top:701px;width:1px;height:16px;background:#a0a0a0"></div>
<div style="left:915px;top:701px;width:1px;height:16px;background:#a0a0a0"></div>
<div style="left:979px;top:701px;width:1px;height:16px;background:#a0a0a0"></div>
<div style="left:1043px;top:701px;width:1px;height:16px;background:#a0a0a0"></div>
<div style="left:1107px;top:701px;width:1px;height:16px;background:#a0a0a0"></div>
<div style="left:1171px;top:701px;width:1px;height:16px;background:#a0a0a0"></div>
<div style="left:1235px;top:701px;width:1px;height:16px;background:#a0a0a0"></div>
<div style="left:1299px;top:701px;width:1px;height:16px;background:#a0a0a0"></div>
<div style="left:1363px;top:701px;width:1px;height:16px;background:#a0a0a0"></div>
<div style="left:391px;top:701px;width:1px;height:16px;background:#a0a0a0"></div>
<div style="left:392px;top:718px;width:972px;height:16px;background:#fff"></div>
<span style="left:425.00px;width:63.00px;text-align:center;top:717.84px;transform:scaleX(0.925);transform-origin:50% 0;font-size:12px;line-height:16px;color:#000;">15</span>
<span style="left:852.00px;width:63.00px;text-align:center;top:717.84px;transform:scaleX(0.925);transform-origin:50% 0;font-size:12px;line-height:16px;color:#000;">0,7</span>
<span style="left:916.00px;width:63.00px;text-align:center;top:717.84px;transform:scaleX(0.925);transform-origin:50% 0;font-size:12px;line-height:16px;color:#000;">1,4</span>
<span style="left:980.00px;width:63.00px;text-align:center;top:717.84px;transform:scaleX(0.925);transform-origin:50% 0;font-size:12px;line-height:16px;color:#000;">2,4</span>
<span style="left:1044.00px;width:63.00px;text-align:center;top:717.84px;transform:scaleX(0.925);transform-origin:50% 0;font-size:12px;line-height:16px;color:#000;">3,2</span>
<span style="left:1108.00px;width:63.00px;text-align:center;top:717.84px;transform:scaleX(0.925);transform-origin:50% 0;font-size:12px;line-height:16px;color:#000;">4,3</span>
<span style="left:1172.00px;width:63.00px;text-align:center;top:717.84px;transform:scaleX(0.925);transform-origin:50% 0;font-size:12px;line-height:16px;color:#000;">6,9</span>
<span style="left:1236.00px;width:63.00px;text-align:center;top:717.84px;transform:scaleX(0.925);transform-origin:50% 0;font-size:12px;line-height:16px;color:#000;">9,5</span>
<span style="left:1300.00px;width:63.00px;text-align:center;top:717.84px;transform:scaleX(0.925);transform-origin:50% 0;font-size:12px;line-height:16px;color:#000;">11</span>
<span style="left:490.50px;top:717.84px;transform:scaleX(0.9094);transform-origin:0 0;font-size:12px;line-height:16px;color:#000;">Предприятия автомобильной и подшипниковой промышленности</span>
<div style="left:391px;top:734px;width:973px;height:1px;background:#a0a0a0"></div>
<div style="left:423px;top:718px;width:1px;height:16px;background:#a0a0a0"></div>
<div style="left:487px;top:718px;width:1px;height:16px;background:#a0a0a0"></div>
<div style="left:851px;top:718px;width:1px;height:16px;background:#a0a0a0"></div>
<div style="left:915px;top:718px;width:1px;height:16px;background:#a0a0a0"></div>
<div style="left:979px;top:718px;width:1px;height:16px;background:#a0a0a0"></div>
<div style="left:1043px;top:718px;width:1px;height:16px;background:#a0a0a0"></div>
<div style="left:1107px;top:718px;width:1px;height:16px;background:#a0a0a0"></div>
<div style="left:1171px;top:718px;width:1px;height:16px;background:#a0a0a0"></div>
<div style="left:1235px;top:718px;width:1px;height:16px;background:#a0a0a0"></div>
<div style="left:1299px;top:718px;width:1px;height:16px;background:#a0a0a0"></div>
<div style="left:1363px;top:718px;width:1px;height:16px;background:#a0a0a0"></div>
<div style="left:391px;top:718px;width:1px;height:16px;background:#a0a0a0"></div>
<div style="left:392px;top:735px;width:972px;height:14px;background:#fff"></div>
<span style="left:425.00px;width:63.00px;text-align:center;top:734.84px;transform:scaleX(0.925);transform-origin:50% 0;font-size:12px;line-height:16px;color:#000;">16</span>
<span style="left:852.00px;width:63.00px;text-align:center;top:734.84px;transform:scaleX(0.925);transform-origin:50% 0;font-size:12px;line-height:16px;color:#000;">0,8</span>
<span style="left:916.00px;width:63.00px;text-align:center;top:734.84px;transform:scaleX(0.925);transform-origin:50% 0;font-size:12px;line-height:16px;color:#000;">1,5</span>
<span style="left:980.00px;width:63.00px;text-align:center;top:734.84px;transform:scaleX(0.925);transform-origin:50% 0;font-size:12px;line-height:16px;color:#000;">2,4</span>
<span style="left:1044.00px;width:63.00px;text-align:center;top:734.84px;transform:scaleX(0.925);transform-origin:50% 0;font-size:12px;line-height:16px;color:#000;">3,2</span>
<span style="left:1108.00px;width:63.00px;text-align:center;top:734.84px;transform:scaleX(0.925);transform-origin:50% 0;font-size:12px;line-height:16px;color:#000;">4,2</span>
<span style="left:1172.00px;width:63.00px;text-align:center;top:734.84px;transform:scaleX(0.925);transform-origin:50% 0;font-size:12px;line-height:16px;color:#000;">6,7</span>
<span style="left:1236.00px;width:63.00px;text-align:center;top:734.84px;transform:scaleX(0.925);transform-origin:50% 0;font-size:12px;line-height:16px;color:#000;">7,5</span>
<span style="left:1300.00px;width:63.00px;text-align:center;top:734.84px;transform:scaleX(0.925);transform-origin:50% 0;font-size:12px;line-height:16px;color:#000;">8,6</span>
<span style="left:490.50px;top:734.84px;transform:scaleX(0.9104);transform-origin:0 0;font-size:12px;line-height:16px;color:#000;">Предприятия судостроительной промышленности</span>
<div style="left:423px;top:735px;width:1px;height:14px;background:#a0a0a0"></div>
<div style="left:487px;top:735px;width:1px;height:14px;background:#a0a0a0"></div>
<div style="left:851px;top:735px;width:1px;height:14px;background:#a0a0a0"></div>
<div style="left:915px;top:735px;width:1px;height:14px;background:#a0a0a0"></div>
<div style="left:979px;top:735px;width:1px;height:14px;background:#a0a0a0"></div>
<div style="left:1043px;top:735px;width:1px;height:14px;background:#a0a0a0"></div>
<div style="left:1107px;top:735px;width:1px;height:14px;background:#a0a0a0"></div>
<div style="left:1171px;top:735px;width:1px;height:14px;background:#a0a0a0"></div>
<div style="left:1235px;top:735px;width:1px;height:14px;background:#a0a0a0"></div>
<div style="left:1299px;top:735px;width:1px;height:14px;background:#a0a0a0"></div>
<div style="left:1363px;top:735px;width:1px;height:14px;background:#a0a0a0"></div>
<div style="left:391px;top:735px;width:1px;height:14px;background:#a0a0a0"></div>
<div style="left:1364px;top:349px;width:3px;height:400px;background:#f0f0f0"></div>
<div style="left:1367px;top:349px;width:17px;height:400px;background:repeating-conic-gradient(#fff 0 25%,#f0f0f0 0 50%) 0 0/2px 2px"></div>
<div style="left:1367px;top:349px;width:17px;height:17px;background:#f0f0f0"></div>
<div style="left:1367px;top:349px;width:16px;height:1px;background:#e3e3e3"></div>
<div style="left:1367px;top:349px;width:1px;height:16px;background:#e3e3e3"></div>
<div style="left:1368px;top:350px;width:14px;height:1px;background:#fff"></div>
<div style="left:1368px;top:350px;width:1px;height:14px;background:#fff"></div>
<div style="left:1367px;top:365px;width:17px;height:1px;background:#696969"></div>
<div style="left:1383px;top:349px;width:1px;height:17px;background:#696969"></div>
<div style="left:1368px;top:364px;width:15px;height:1px;background:#a0a0a0"></div>
<div style="left:1382px;top:350px;width:1px;height:15px;background:#a0a0a0"></div>
<div style="left:1367px;top:366px;width:17px;height:46px;background:#f0f0f0"></div>
<div style="left:1367px;top:366px;width:16px;height:1px;background:#e3e3e3"></div>
<div style="left:1367px;top:366px;width:1px;height:45px;background:#e3e3e3"></div>
<div style="left:1368px;top:367px;width:14px;height:1px;background:#fff"></div>
<div style="left:1368px;top:367px;width:1px;height:43px;background:#fff"></div>
<div style="left:1367px;top:411px;width:17px;height:1px;background:#696969"></div>
<div style="left:1383px;top:366px;width:1px;height:46px;background:#696969"></div>
<div style="left:1368px;top:410px;width:15px;height:1px;background:#a0a0a0"></div>
<div style="left:1382px;top:367px;width:1px;height:44px;background:#a0a0a0"></div>
<div style="left:1367px;top:732px;width:17px;height:17px;background:#f0f0f0"></div>
<div style="left:1367px;top:732px;width:16px;height:1px;background:#e3e3e3"></div>
<div style="left:1367px;top:732px;width:1px;height:16px;background:#e3e3e3"></div>
<div style="left:1368px;top:733px;width:14px;height:1px;background:#fff"></div>
<div style="left:1368px;top:733px;width:1px;height:14px;background:#fff"></div>
<div style="left:1367px;top:748px;width:17px;height:1px;background:#696969"></div>
<div style="left:1383px;top:732px;width:1px;height:17px;background:#696969"></div>
<div style="left:1368px;top:747px;width:15px;height:1px;background:#a0a0a0"></div>
<div style="left:1382px;top:733px;width:1px;height:15px;background:#a0a0a0"></div>
<svg style="left:1372px;top:355px" width="7" height="4" viewBox="0 0 7 4"><path d="M0 4h7l-3.500-4z" fill="#000"/></svg>
<svg style="left:1372px;top:739px" width="7" height="4" viewBox="0 0 7 4"><path d="M0 0h7l-3.500 4z" fill="#000"/></svg>
<div style="left:1305px;top:761px;width:75px;height:25px;background:#f0f0f0"></div>
<div style="left:1305px;top:761px;width:74px;height:1px;background:#fff"></div>
<div style="left:1305px;top:761px;width:1px;height:24px;background:#fff"></div>
<div style="left:1305px;top:785px;width:75px;height:1px;background:#696969"></div>
<div style="left:1379px;top:761px;width:1px;height:25px;background:#696969"></div>
<div style="left:1306px;top:784px;width:73px;height:1px;background:#a0a0a0"></div>
<div style="left:1378px;top:762px;width:1px;height:23px;background:#a0a0a0"></div>
<span style="left:1320.70px;top:764.84px;transform:scaleX(0.9412);transform-origin:0 0;font-size:12px;line-height:16px;color:#000;">Закрыть</span>
</body></html>
